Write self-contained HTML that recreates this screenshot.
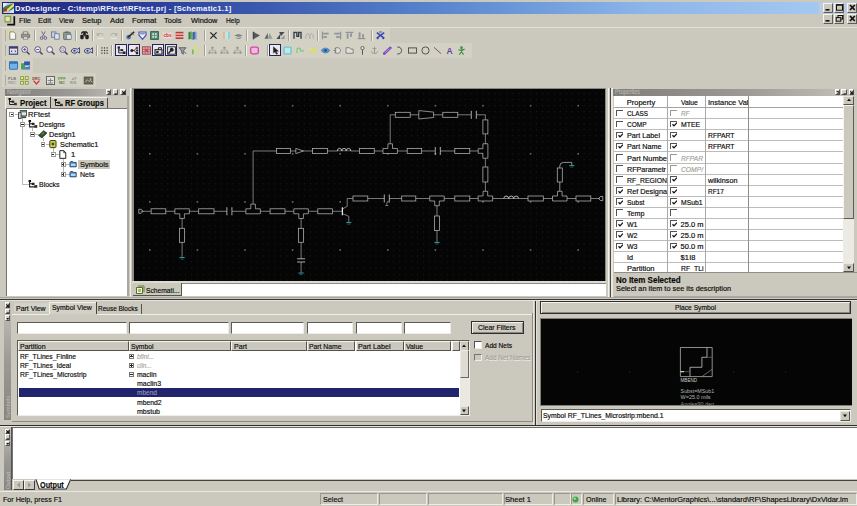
<!DOCTYPE html>
<html>
<head>
<meta charset="utf-8">
<title>DxDesigner</title>
<style>
html,body{margin:0;padding:0;}
body{width:857px;height:506px;overflow:hidden;background:#cbc9bd;font-family:"Liberation Sans",sans-serif;font-size:8px;color:#000;}
#app{position:relative;width:857px;height:506px;overflow:hidden;background:#cbc9bd;}
#app div,#app span,#app svg{position:absolute;box-sizing:border-box;white-space:nowrap;}
.t{line-height:10px;height:10px;font-size:8px;color:#0c0c0c;transform-origin:0 50%;-webkit-text-stroke:.18px currentColor;}
.b{font-weight:bold;}
.i{font-style:italic;}
.w{background:#fff;}
.k{background:#050505;}
.sunk{border:1px solid;border-color:#6f6c66 #f4f2ec #f4f2ec #6f6c66;}
.rais{border:1px solid;border-color:#f6f4ee #5f5c57 #5f5c57 #f6f4ee;}
.ptitle{background:linear-gradient(90deg,#7f7e7b 0%,#9c9a96 55%,#c6c3bb 100%);}
.hl{background:#f3f1ea;}
.dk{background:#6b6964;}
.vd{background:#3c3b38;}
.ic{transform:scale(.9);opacity:.92;}

</style>
</head>
<body>
<div id="app">
<div style="left:2px;top:2px;width:855px;height:11.6px;background:linear-gradient(90deg,#20267f 0%,#2a3f9c 18%,#5683cc 50%,#8cb5e9 75%,#a9ccf2 100%);"><span class="t b" style="left:13px;top:2.0px;font-size:7.7px;color:#f2f4fa;letter-spacing:0.24px;-webkit-text-stroke:0;">DxDesigner - C:\temp\RFtest\RFtest.prj - [Schematic1.1]</span></div>
<svg style="left:3px;top:3px" width="11" height="10" viewBox="0 0 11 10"><rect width="11" height="10" fill="#a8cce8"/><path d="M0 4L11 0V6L0 10z" fill="#4c7a4a"/><path d="M0 10 L11 0 L11 3 L3 10Z" fill="#e8e070"/><path d="M0 0h5L0 5z" fill="#e9ecef"/><path d="M6 10 L11 5 V10z" fill="#dfe6ea"/><circle cx="2.5" cy="7" r="1.6" fill="#b03030"/></svg>
<div style="left:819px;top:2px;width:38px;height:11.6px;background:#cfd0d0;opacity:.55"></div>
<div class="rais" style="left:822.5px;top:3px;width:10.5px;height:9.5px;background:#cbc9bd;"><svg style="left:-1px;top:-1px" width="11" height="10" viewBox="0 0 11 10"><rect x="2.5" y="6" width="4" height="1.6" fill="#111"/></svg></div>
<div class="rais" style="left:833.5px;top:3px;width:10.5px;height:9.5px;background:#cbc9bd;"><svg style="left:-1px;top:-1px" width="11" height="10" viewBox="0 0 11 10"><rect x="2.5" y="1.8" width="6" height="5.4" fill="none" stroke="#111" stroke-width="1"/><rect x="2" y="1.3" width="7" height="1.3" fill="#111"/></svg></div>
<div class="rais" style="left:846.5px;top:3px;width:10.5px;height:9.5px;background:#cbc9bd;"><svg style="left:-1px;top:-1px" width="11" height="10" viewBox="0 0 11 10"><path d="M3 2 L7.8 7 M7.8 2 L3 7" stroke="#111" stroke-width="1.7"/></svg></div>
<div class="rais" style="left:822.5px;top:14px;width:10.5px;height:9.5px;background:#cbc9bd;"><svg style="left:-1px;top:-1px" width="11" height="10" viewBox="0 0 11 10"><rect x="2.5" y="6" width="4" height="1.6" fill="#111"/></svg></div>
<div class="rais" style="left:833.5px;top:14px;width:10.5px;height:9.5px;background:#cbc9bd;"><svg style="left:-1px;top:-1px" width="11" height="10" viewBox="0 0 11 10"><rect x="4" y="1.5" width="4.6" height="3.6" fill="none" stroke="#111" stroke-width="1"/><rect x="2.2" y="3.6" width="4.6" height="3.6" fill="#cbc9bd" stroke="#111" stroke-width="1"/></svg></div>
<div class="rais" style="left:846.5px;top:14px;width:10.5px;height:9.5px;background:#cbc9bd;"><svg style="left:-1px;top:-1px" width="11" height="10" viewBox="0 0 11 10"><path d="M3 2 L7.8 7 M7.8 2 L3 7" stroke="#111" stroke-width="1.7"/></svg></div>
<svg style="left:3px;top:14px" width="13" height="12" viewBox="0 0 13 12"><rect x="1.4" y="1.7" width="6.9" height="6.8" fill="#8c9c58"/><rect x="2.6" y="2.9" width="4.2" height="4.2" fill="#dfe7a6"/><path d="M11.3 2.2V10.7H4.2" stroke="#0c0c0c" stroke-width="1.7" fill="none"/></svg>
<span class="t" style="left:19px;top:15.5px;transform:scaleX(0.931);">File</span>
<span class="t" style="left:38px;top:15.5px;transform:scaleX(0.942);">Edit</span>
<span class="t" style="left:59px;top:15.5px;transform:scaleX(0.843);">View</span>
<span class="t" style="left:82px;top:15.5px;transform:scaleX(0.933);">Setup</span>
<span class="t" style="left:110px;top:15.5px;transform:scaleX(0.962);">Add</span>
<span class="t" style="left:131.5px;top:15.5px;transform:scaleX(0.967);">Format</span>
<span class="t" style="left:164px;top:15.5px;transform:scaleX(0.936);">Tools</span>
<span class="t" style="left:190.5px;top:15.5px;transform:scaleX(0.931);">Window</span>
<span class="t" style="left:226px;top:15.5px;transform:scaleX(0.833);">Help</span>
<div style="left:0px;top:27px;width:857px;height:1px;background:#e3e1d8;"></div>
<div style="left:2px;top:28px;width:388px;height:15px;background:#d2d1c4;"></div>
<div style="left:2px;top:43px;width:470px;height:15px;background:#d2d1c4;"></div>
<div style="left:2px;top:58px;width:31px;height:15px;background:#d2d1c4;"></div>
<div style="left:2px;top:73px;width:94px;height:14px;background:#d2d1c4;"></div>
<div style="left:4.5px;top:30px;width:1px;height:11px;background:#f4f2ec;"></div>
<div style="left:5.4px;top:30px;width:0.8px;height:11px;background:#aeaba4;"></div>
<div style="left:4.5px;top:45px;width:1px;height:11px;background:#f4f2ec;"></div>
<div style="left:5.4px;top:45px;width:0.8px;height:11px;background:#aeaba4;"></div>
<div style="left:4.5px;top:60px;width:1px;height:11px;background:#f4f2ec;"></div>
<div style="left:5.4px;top:60px;width:0.8px;height:11px;background:#aeaba4;"></div>
<div style="left:4.5px;top:75px;width:1px;height:11px;background:#f4f2ec;"></div>
<div style="left:5.4px;top:75px;width:0.8px;height:11px;background:#aeaba4;"></div>
<svg class="ic" style="left:7.4px;top:29.5px" width="11" height="11" viewBox="0 0 11 11"><circle cx="3.5" cy="3" r="3" fill="#f1e870" opacity=".85"/><path d="M2.5 1.5h4.3l2.2 2.2v6H2.5z" fill="#fffef6" stroke="#6b6b62" stroke-width=".9"/></svg>
<svg class="ic" style="left:20.3px;top:29.5px" width="11" height="11" viewBox="0 0 11 11"><path d="M3 4V1.5h5V4" fill="#f4f4f0" stroke="#555" stroke-width=".8"/><rect x="1" y="4" width="9" height="4" rx="1" fill="#9a9892" stroke="#4a4a48" stroke-width=".8"/><rect x="3" y="7" width="5" height="2.5" fill="#e8e8e4" stroke="#555" stroke-width=".6"/></svg>
<div style="left:34.0px;top:29.5px;width:.9px;height:11px;background:#a3a199;"></div><div style="left:34.9px;top:29.5px;width:.8px;height:11px;background:#f1efe9;"></div>
<svg class="ic" style="left:37.5px;top:29.5px" width="11" height="11" viewBox="0 0 11 11"><path d="M3.5 1L7 7M7.5 1L4 7" stroke="#5a6a86" stroke-width="1.1" fill="none"/><circle cx="3.4" cy="8.4" r="1.5" fill="none" stroke="#6a4a9a" stroke-width="1"/><circle cx="7.6" cy="8.4" r="1.5" fill="none" stroke="#6a4a9a" stroke-width="1"/></svg>
<svg class="ic" style="left:49.5px;top:29.5px" width="11" height="11" viewBox="0 0 11 11"><rect x="1" y="1.5" width="5" height="6" fill="#c6cfdf" stroke="#5a6a90" stroke-width=".9"/><rect x="4.6" y="3.6" width="5" height="6" fill="#dfe5f0" stroke="#5a6a90" stroke-width=".9"/></svg>
<svg class="ic" style="left:62.0px;top:29.5px" width="11" height="11" viewBox="0 0 11 11"><rect x="1.2" y="2" width="7.6" height="8" rx=".8" fill="#8d9a8c" stroke="#4c5a50" stroke-width=".9"/><rect x="3.2" y="1" width="3.6" height="2" fill="#5a6660"/><rect x="4.6" y="4.6" width="5" height="5" fill="#e6eaf2" stroke="#5a6a90" stroke-width=".8"/></svg>
<div style="left:75.4px;top:29.5px;width:.9px;height:11px;background:#a3a199;"></div><div style="left:76.3px;top:29.5px;width:.8px;height:11px;background:#f1efe9;"></div>
<svg class="ic" style="left:78.5px;top:29.5px" width="11" height="11" viewBox="0 0 11 11"><path d="M2 3.2L3.6 1.4h1.2V5M9 3.2L7.4 1.4H6.2V5" stroke="#111" stroke-width="1.5" fill="none"/><rect x=".8" y="4.6" width="3.8" height="5" rx="1.2" fill="#111"/><rect x="6.4" y="4.6" width="3.8" height="5" rx="1.2" fill="#111"/><rect x="4.4" y="4" width="2.2" height="2.4" fill="#222"/></svg>
<div style="left:91.9px;top:29.5px;width:.9px;height:11px;background:#a3a199;"></div><div style="left:92.8px;top:29.5px;width:.8px;height:11px;background:#f1efe9;"></div>
<svg class="ic" style="left:94.5px;top:29.5px" width="11" height="11" viewBox="0 0 11 11"><path d="M2.4 4.6C4 2.6 7.4 2.6 8.8 5.4" stroke="#a3a19b" stroke-width="1" fill="none"/><path d="M1.4 2.4v3h3z" fill="#a3a19b"/><path d="M2 8.6h7.4" stroke="#f4f2ec" stroke-width=".9"/></svg>
<svg class="ic" style="left:107.5px;top:29.5px" width="11" height="11" viewBox="0 0 11 11"><path d="M8.6 4.6C7 2.6 3.6 2.6 2.2 5.4" stroke="#a3a19b" stroke-width="1" fill="none"/><path d="M9.6 2.4v3h-3z" fill="#a3a19b"/><path d="M2 8.6h7.4" stroke="#f4f2ec" stroke-width=".9"/></svg>
<div style="left:120.80000000000001px;top:29.5px;width:.9px;height:11px;background:#a3a199;"></div><div style="left:121.7px;top:29.5px;width:.8px;height:11px;background:#f1efe9;"></div>
<svg class="ic" style="left:125.1px;top:29.5px" width="11" height="11" viewBox="0 0 11 11"><circle cx="3.4" cy="7.4" r="2.6" fill="#4a78c8"/><path d="M2.6 7.6L9.6 1.4" stroke="#222" stroke-width="1.8"/><path d="M6.4 2.2l2.8 3" stroke="#555" stroke-width="1"/></svg>
<svg class="ic" style="left:136.8px;top:29.5px" width="11" height="11" viewBox="0 0 11 11"><path d="M1.6 1.6h7.8v3.6L5.5 9.8L1.6 5.2z" fill="#eef2fb" stroke="#3a4fb0" stroke-width="1.3"/><path d="M3 3.6h5" stroke="#3a4fb0" stroke-width="1"/></svg>
<svg class="ic" style="left:149.3px;top:29.5px" width="11" height="11" viewBox="0 0 11 11"><rect x="1.2" y="1.2" width="8.6" height="8.6" fill="#4f8a72" stroke="#1f4e3a" stroke-width="1"/><rect x="3" y="3" width="2" height="2" fill="#cfe6da"/><rect x="6" y="3" width="2" height="2" fill="#cfe6da"/><rect x="3" y="6" width="2" height="2" fill="#cfe6da"/><rect x="6" y="6" width="2" height="2" fill="#cfe6da"/></svg>
<svg class="ic" style="left:161.9px;top:29.5px" width="11" height="11" viewBox="0 0 11 11"><rect x="0" y="2.4" width="11" height="6.2" fill="#f6d8d8"/><text x="5.5" y="7.4" font-family="Liberation Sans,sans-serif" font-size="5.2" font-weight="bold" fill="#c0272d" text-anchor="middle">cbs</text></svg>
<svg class="ic" style="left:174.0px;top:29.5px" width="11" height="11" viewBox="0 0 11 11"><rect x="1.2" y="1.4" width="8.6" height="2" fill="#c22a2a"/><rect x="1.2" y="4.4" width="8.6" height="2" fill="#c22a2a"/><rect x="1.2" y="7.4" width="8.6" height="2" fill="#c22a2a"/><path d="M1.2 3.9h8.6M1.2 6.9h8.6" stroke="#f4dada" stroke-width=".8"/></svg>
<svg class="ic" style="left:186.9px;top:29.5px" width="11" height="11" viewBox="0 0 11 11"><path d="M1 2l2.6-1v8.4L1 10z" fill="#2f7a3a"/><path d="M3.6 1l2.4 1v8.4l-2.4-1z" fill="#5aa860"/><path d="M6 2l2.2-1v8.4L6 10.4z" fill="#3a56b8"/><path d="M8.2 1l1.8 1v8.4l-1.8-1z" fill="#7c92dc"/></svg>
<div style="left:203.9px;top:29.5px;width:.9px;height:11px;background:#a3a199;"></div><div style="left:204.8px;top:29.5px;width:.8px;height:11px;background:#f1efe9;"></div>
<svg class="ic" style="left:208.1px;top:29.5px" width="11" height="11" viewBox="0 0 11 11"><path d="M2 2l7 7M9 2l-7 7" stroke="#1a1a1a" stroke-width="1.4"/></svg>
<svg class="ic" style="left:221.0px;top:29.5px" width="11" height="11" viewBox="0 0 11 11"><rect x="1.6" y="1.6" width="2.2" height="7.8" fill="#e8b48a"/><rect x="3.8" y="1.6" width="3.4" height="7.8" fill="#bfe6e6"/><rect x="7.2" y="1.6" width="2.2" height="7.8" fill="#8fd0d4"/></svg>
<svg class="ic" style="left:233.2px;top:29.5px" width="11" height="11" viewBox="0 0 11 11"><text x="5.5" y="9" font-family="Liberation Sans,sans-serif" font-size="9" font-weight="bold" fill="#7d8a84" text-anchor="middle">S</text><path d="M1.4 5.6h8.2" stroke="#6a6a66" stroke-width=".9"/></svg>
<div style="left:246.20000000000002px;top:29.5px;width:.9px;height:11px;background:#a3a199;"></div><div style="left:247.10000000000002px;top:29.5px;width:.8px;height:11px;background:#f1efe9;"></div>
<svg class="ic" style="left:250.5px;top:29.5px" width="11" height="11" viewBox="0 0 11 11"><path d="M2 1.4L9.4 5.5L2 9.6z" fill="#4a5058"/><path d="M2 1.4v8.2" stroke="#2a2f36" stroke-width="1.2"/></svg>
<svg class="ic" style="left:262.5px;top:29.5px" width="11" height="11" viewBox="0 0 11 11"><path d="M1 9L4.6 2.6L5.4 9z" fill="#5a6068"/><path d="M10 9L6.4 2.6L5.6 9z" fill="#8e949c"/></svg>
<svg class="ic" style="left:275.0px;top:29.5px" width="11" height="11" viewBox="0 0 11 11"><path d="M1 9.4L5 4v5.4z" fill="#3a4048"/><path d="M4 1.6h6L6 6.4z" fill="#3a4048"/><path d="M5.6 9.4h4.4V5z" fill="#8e949c"/></svg>
<div style="left:288.0px;top:29.5px;width:.9px;height:11px;background:#a3a199;"></div><div style="left:288.90000000000003px;top:29.5px;width:.8px;height:11px;background:#f1efe9;"></div>
<svg class="ic" style="left:291.5px;top:29.5px" width="11" height="11" viewBox="0 0 11 11"><path d="M1.6 9V2h3.2v4.4h2V2h2.6v7" stroke="#24303c" stroke-width="1.5" fill="none"/></svg>
<svg class="ic" style="left:303.5px;top:29.5px" width="11" height="11" viewBox="0 0 11 11"><path d="M1.4 9V5.6L3.6 3l2 2.6V9M5.8 9V5.4L7.6 3l2 2.4V9" stroke="#a3a7aa" stroke-width="1" fill="none"/></svg>
<div style="left:316.79999999999995px;top:29.5px;width:.9px;height:11px;background:#a3a199;"></div><div style="left:317.7px;top:29.5px;width:.8px;height:11px;background:#f1efe9;"></div>
<svg class="ic" style="left:319.5px;top:29.5px" width="11" height="11" viewBox="0 0 11 11"><path d="M2 1.2v8.6" stroke="#7d838a" stroke-width="1.1"/><rect x="3" y="2.4" width="6" height="2" fill="#8a9098"/><rect x="3" y="6.2" width="4" height="2" fill="#8a9098"/></svg>
<svg class="ic" style="left:331.5px;top:29.5px" width="11" height="11" viewBox="0 0 11 11"><path d="M9 1.2v8.6" stroke="#7d838a" stroke-width="1.1"/><rect x="2" y="2.4" width="6" height="2" fill="#8a9098"/><rect x="4" y="6.2" width="4" height="2" fill="#8a9098"/></svg>
<svg class="ic" style="left:344.1px;top:29.5px" width="11" height="11" viewBox="0 0 11 11"><path d="M1.2 2h8.6" stroke="#7d838a" stroke-width="1.1"/><rect x="2.4" y="3" width="2" height="6" fill="#8a9098"/><rect x="6.2" y="3" width="2" height="4" fill="#8a9098"/></svg>
<svg class="ic" style="left:355.9px;top:29.5px" width="11" height="11" viewBox="0 0 11 11"><path d="M1.2 9h8.6" stroke="#7d838a" stroke-width="1.1"/><rect x="2.4" y="2" width="2" height="6" fill="#8a9098"/><rect x="6.2" y="4" width="2" height="4" fill="#8a9098"/></svg>
<div style="left:370.79999999999995px;top:29.5px;width:.9px;height:11px;background:#a3a199;"></div><div style="left:371.7px;top:29.5px;width:.8px;height:11px;background:#f1efe9;"></div>
<svg class="ic" style="left:374.7px;top:29.5px" width="11" height="11" viewBox="0 0 11 11"><path d="M1.4 2.4L9.6 8.4M9.6 2.4L1.4 8.4" stroke="#2a3cae" stroke-width="1.7"/><path d="M4 1.6l3 0" stroke="#2a3cae" stroke-width="1.2"/><circle cx="2.4" cy="8.6" r="1.2" fill="#2a3cae"/><circle cx="8.6" cy="8.6" r="1.2" fill="#2a3cae"/></svg>
<svg class="ic" style="left:7.9px;top:44.5px" width="11" height="11" viewBox="0 0 11 11"><rect x="0.8" y="1.4" width="9.4" height="8.2" fill="#e4e4f0" stroke="#2a2f6a" stroke-width="1.2"/><rect x="0.8" y="1.4" width="9.4" height="2" fill="#2a2f6a"/><path d="M2.4 6.4l1.6-1.4v2.8zM8.6 6.4L7 5v2.8z" fill="#2a2f6a"/></svg>
<svg class="ic" style="left:20.3px;top:44.5px" width="11" height="11" viewBox="0 0 11 11"><circle cx="4.6" cy="4.4" r="3.2" fill="#f2f0f6" stroke="#5a4a80" stroke-width="1.1"/><path d="M7 7l3 3" stroke="#3a3350" stroke-width="1.6"/><path d="M3 4.4h3.2M4.6 2.8V6" stroke="#5a3a90" stroke-width="1"/></svg>
<svg class="ic" style="left:32.5px;top:44.5px" width="11" height="11" viewBox="0 0 11 11"><circle cx="4.6" cy="4.4" r="3.2" fill="#f2f0f6" stroke="#5a4a80" stroke-width="1.1"/><path d="M7 7l3 3" stroke="#3a3350" stroke-width="1.6"/><path d="M3 4.4h3.2" stroke="#5a3a90" stroke-width="1"/></svg>
<svg class="ic" style="left:45.3px;top:44.5px" width="11" height="11" viewBox="0 0 11 11"><circle cx="4.6" cy="4.4" r="3.2" fill="#f2f0f6" stroke="#5a4a80" stroke-width="1.1"/><path d="M7 7l3 3" stroke="#3a3350" stroke-width="1.6"/></svg>
<svg class="ic" style="left:57.8px;top:44.5px" width="11" height="11" viewBox="0 0 11 11"><circle cx="4.6" cy="4.4" r="3.2" fill="#f2f0f6" stroke="#5a4a80" stroke-width="1.1"/><path d="M7 7l3 3" stroke="#3a3350" stroke-width="1.6"/><path d="M3.4 3.4h2.4v2H3.4z" fill="none" stroke="#8a7ab0" stroke-width=".7"/></svg>
<svg class="ic" style="left:69.9px;top:44.5px" width="11" height="11" viewBox="0 0 11 11"><path d="M1 5l2.2-1.6h3l1.2 1 2.6-2v6l-2.6-1.6-1.2 1.6h-3L1 7z" fill="#c9cce0" stroke="#2a2f6a" stroke-width="1"/><circle cx="4.4" cy="5.8" r="1.2" fill="#2a2f6a"/></svg>
<svg class="ic" style="left:82.5px;top:44.5px" width="11" height="11" viewBox="0 0 11 11"><path d="M1 5l2.2-1.6h3l1.2 1 2.6-2v6l-2.6-1.6-1.2 1.6h-3L1 7z" fill="#c9cce0" stroke="#2a2f6a" stroke-width="1"/><circle cx="4.4" cy="5.8" r="1.2" fill="#2a2f6a"/></svg>
<div style="left:95.80000000000001px;top:44.5px;width:.9px;height:11px;background:#a3a199;"></div><div style="left:96.7px;top:44.5px;width:.8px;height:11px;background:#f1efe9;"></div>
<svg class="ic" style="left:99.2px;top:44.5px" width="11" height="11" viewBox="0 0 11 11"><rect x="2" y="2" width="1.3" height="1.3" fill="#222"/><rect x="2" y="4.9" width="1.3" height="1.3" fill="#222"/><rect x="2" y="7.8" width="1.3" height="1.3" fill="#222"/><rect x="4.9" y="2" width="1.3" height="1.3" fill="#222"/><rect x="4.9" y="4.9" width="1.3" height="1.3" fill="#222"/><rect x="4.9" y="7.8" width="1.3" height="1.3" fill="#222"/><rect x="7.8" y="2" width="1.3" height="1.3" fill="#222"/><rect x="7.8" y="4.9" width="1.3" height="1.3" fill="#222"/><rect x="7.8" y="7.8" width="1.3" height="1.3" fill="#222"/></svg>
<div style="left:111.4px;top:44.5px;width:.9px;height:11px;background:#a3a199;"></div><div style="left:112.3px;top:44.5px;width:.8px;height:11px;background:#f1efe9;"></div>
<div style="left:115.4px;top:44px;width:12px;height:12px;background:#e9e8ee;border:1.1px solid #23235e;"></div>
<svg class="ic" style="left:115.9px;top:44.5px" width="11" height="11" viewBox="0 0 11 11"><path d="M2.4 1.6v6.6h6.6M2.4 5h3" stroke="#111" stroke-width="1.1" fill="none"/><rect x="1.2" y="1" width="2.6" height="2.4" fill="#111"/><rect x="4.6" y="4" width="2.8" height="2.2" fill="#111"/><rect x="7" y="6.6" width="3" height="2.8" fill="#111"/></svg>
<div style="left:128px;top:44px;width:12px;height:12px;background:#e9e8ee;border:1.1px solid #23235e;"></div>
<svg class="ic" style="left:128.5px;top:44.5px" width="11" height="11" viewBox="0 0 11 11"><path d="M2 5.5h3L8 2.6M5 5.5L8 8.4" stroke="#111" stroke-width="1" fill="none"/><circle cx="2.6" cy="5.5" r="1.7" fill="#111"/><rect x="7" y="1.4" width="2.6" height="2.4" fill="#a02020"/><rect x="7" y="7.2" width="2.6" height="2.4" fill="#111"/><rect x="7.4" y="4.4" width="2.2" height="2.2" fill="#111"/></svg>
<svg class="ic" style="left:140.5px;top:44.5px" width="11" height="11" viewBox="0 0 11 11"><rect x="1" y="1.4" width="9" height="8.2" fill="#e9a8b0" stroke="#8a3040" stroke-width=".9"/><path d="M1 4.2h9M1 6.8h9M4 1.4v8.2M7 1.4v8.2" stroke="#a84858" stroke-width=".8"/><rect x="4" y="4.2" width="3" height="2.6" fill="#c23a4a"/></svg>
<div style="left:152px;top:44px;width:12px;height:12px;background:#e9e8ee;border:1.1px solid #23235e;"></div>
<svg class="ic" style="left:152.5px;top:44.5px" width="11" height="11" viewBox="0 0 11 11"><rect x="1.6" y="4.6" width="7.8" height="5" fill="none" stroke="#111" stroke-width="1.2"/><path d="M5.4 4.4V2.4h3.4v2" stroke="#111" stroke-width="1.1" fill="none"/><rect x="3" y="6" width="2.6" height="2.4" fill="#111"/></svg>
<div style="left:165px;top:44px;width:12px;height:12px;background:#e9e8ee;border:1.1px solid #23235e;"></div>
<svg class="ic" style="left:165.5px;top:44.5px" width="11" height="11" viewBox="0 0 11 11"><rect x="1.2" y="1.4" width="8.6" height="8.2" fill="none" stroke="#111" stroke-width="1"/><circle cx="5.8" cy="4.6" r="2.2" fill="#111"/><path d="M4.4 6L2 9" stroke="#111" stroke-width="1.6"/><path d="M7 3l2 0" stroke="#fff" stroke-width=".7"/></svg>
<svg class="ic" style="left:177.0px;top:44.5px" width="11" height="11" viewBox="0 0 11 11"><path d="M1.6 2.4h7.8L6.4 6v3.6L4.6 8.4V6z" fill="#9a9ca0" stroke="#4a4c52" stroke-width=".9"/><path d="M7.4 6.6l2 2.4" stroke="#3a3c42" stroke-width="1"/></svg>
<svg class="ic" style="left:189.5px;top:44.5px" width="11" height="11" viewBox="0 0 11 11"><path d="M2.6 9.6V4.2c0-3 5.8-3 5.8 0v5.4" stroke="#d8e060" stroke-width="1.4" fill="none"/><path d="M2.6 9.6V4.4" stroke="#58a858" stroke-width="1.4"/></svg>
<div style="left:203.9px;top:44.5px;width:.9px;height:11px;background:#a3a199;"></div><div style="left:204.8px;top:44.5px;width:.8px;height:11px;background:#f1efe9;"></div>
<svg class="ic" style="left:206.5px;top:44.5px" width="11" height="11" viewBox="0 0 11 11"><rect x="4.2" y="1.4" width="2.4" height="2.2" fill="#8a8c88"/><rect x="1" y="6.8" width="2.4" height="2.2" fill="#8a8c88"/><rect x="4.2" y="6.8" width="2.4" height="2.2" fill="#a6a8a4"/><rect x="7.6" y="6.8" width="2.4" height="2.2" fill="#8a8c88"/><path d="M5.4 3.6v1.6M2.2 6.8V5.2h6.6v1.6" stroke="#9a9c98" stroke-width=".7" fill="none"/></svg>
<svg class="ic" style="left:219.0px;top:44.5px" width="11" height="11" viewBox="0 0 11 11"><rect x="4.2" y="1.4" width="2.4" height="2.2" fill="#8a8c88"/><rect x="1" y="6.8" width="2.4" height="2.2" fill="#8a8c88"/><rect x="4.2" y="6.8" width="2.4" height="2.2" fill="#a6a8a4"/><rect x="7.6" y="6.8" width="2.4" height="2.2" fill="#8a8c88"/><path d="M5.4 3.6v1.6M2.2 6.8V5.2h6.6v1.6" stroke="#9a9c98" stroke-width=".7" fill="none"/></svg>
<svg class="ic" style="left:231.5px;top:44.5px" width="11" height="11" viewBox="0 0 11 11"><rect x="4.2" y="1.4" width="2.4" height="2.2" fill="#8a8c88"/><rect x="1" y="6.8" width="2.4" height="2.2" fill="#8a8c88"/><rect x="4.2" y="6.8" width="2.4" height="2.2" fill="#a6a8a4"/><rect x="7.6" y="6.8" width="2.4" height="2.2" fill="#8a8c88"/><path d="M5.4 3.6v1.6M2.2 6.8V5.2h6.6v1.6" stroke="#9a9c98" stroke-width=".7" fill="none"/></svg>
<div style="left:245.4px;top:44.5px;width:.9px;height:11px;background:#a3a199;"></div><div style="left:246.3px;top:44.5px;width:.8px;height:11px;background:#f1efe9;"></div>
<svg class="ic" style="left:248.9px;top:44.5px" width="11" height="11" viewBox="0 0 11 11"><rect x="1.2" y="1.8" width="8.6" height="7.4" rx="2" fill="#f4b8e0" stroke="#d63aa8" stroke-width="1.5"/></svg>
<div style="left:266.7px;top:44.5px;width:.9px;height:11px;background:#a3a199;"></div><div style="left:267.6px;top:44.5px;width:.8px;height:11px;background:#f1efe9;"></div>
<div style="left:269.2px;top:44px;width:12px;height:12px;background:#e9e8ee;border:1.1px solid #23235e;"></div>
<svg class="ic" style="left:269.7px;top:44.5px" width="11" height="11" viewBox="0 0 11 11"><path d="M3.2 1.4v7l1.8-1.6 1.4 3 1.4-.6-1.4-3h2.4z" fill="#111" stroke="#111" stroke-width=".5"/><path d="M6.4 7.4l1.6 2.2" stroke="#b03030" stroke-width="1"/></svg>
<svg class="ic" style="left:282.3px;top:44.5px" width="11" height="11" viewBox="0 0 11 11"><rect x="1.6" y="1.8" width="7.8" height="7.4" rx="1" fill="#bfeaf0" stroke="#5fc8d8" stroke-width="1.5"/></svg>
<svg class="ic" style="left:294.5px;top:44.5px" width="11" height="11" viewBox="0 0 11 11"><path d="M1.6 8.4V4.6c0-2.4 4-2.4 4 0v1.4h3.8" stroke="#7cc87c" stroke-width="1.4" fill="none"/></svg>
<svg class="ic" style="left:307.5px;top:44.5px" width="11" height="11" viewBox="0 0 11 11"><path d="M1.2 5.5h8.6M5.5 2.4v6.2" stroke="#e2e04a" stroke-width="1.6"/><rect x="1.2" y="3.2" width="2" height="1.6" fill="#e8e680"/></svg>
<svg class="ic" style="left:320.2px;top:44.5px" width="11" height="11" viewBox="0 0 11 11"><path d="M.8 5.5C3 2 8 2 10.2 5.5C8 9 3 9 .8 5.5z" fill="#4a90d0" stroke="#2a6ab0" stroke-width=".8"/><circle cx="5.5" cy="5.5" r="1.6" fill="#1a4a8a"/></svg>
<svg class="ic" style="left:331.5px;top:44.5px" width="11" height="11" viewBox="0 0 11 11"><path d="M1 5.5h2.4M3.4 2.4h2.4c4 0 4 6.2 0 6.2H3.4z" fill="#e2e0da" stroke="#6a6c70" stroke-width=".9"/><path d="M2 3.6h1.4M2 7.4h1.4" stroke="#6a6c70" stroke-width=".8"/></svg>
<svg class="ic" style="left:344.1px;top:44.5px" width="11" height="11" viewBox="0 0 11 11"><path d="M1.6 2.4h4l1.4 1.6h2.6v4.6h-8z" fill="#e2e0da" stroke="#6a6c70" stroke-width=".9"/></svg>
<svg class="ic" style="left:356.5px;top:44.5px" width="11" height="11" viewBox="0 0 11 11"><circle cx="5.5" cy="2.8" r="1.8" fill="#f0eee8" stroke="#4a4c52" stroke-width="1"/><path d="M5.5 4.6v5.6" stroke="#4a4c52" stroke-width="1.1"/></svg>
<svg class="ic" style="left:368.9px;top:44.5px" width="11" height="11" viewBox="0 0 11 11"><path d="M5.5 1.4v7.4M3.4 3.4h4.2M2 6.4c.4 3.2 6.6 3.2 7 0" stroke="#8a8c90" stroke-width="1" fill="none"/></svg>
<svg class="ic" style="left:381.8px;top:44.5px" width="11" height="11" viewBox="0 0 11 11"><path d="M2 8.8L8.6 2.6" stroke="#7a3ac0" stroke-width="3" stroke-linecap="round"/><path d="M2.6 8.2L8 3.2" stroke="#c8a0f0" stroke-width=".9"/></svg>
<svg class="ic" style="left:394.3px;top:44.5px" width="11" height="11" viewBox="0 0 11 11"><path d="M3 1.6c6.4-.6 6.4 8.4 0 7.8" stroke="#3a3c44" stroke-width="1" fill="none"/></svg>
<svg class="ic" style="left:406.9px;top:44.5px" width="11" height="11" viewBox="0 0 11 11"><rect x="1" y="2.6" width="9" height="5.8" fill="none" stroke="#3a3c44" stroke-width="1"/></svg>
<svg class="ic" style="left:419.5px;top:44.5px" width="11" height="11" viewBox="0 0 11 11"><circle cx="5.5" cy="5.5" r="4" fill="none" stroke="#3a3c44" stroke-width="1"/></svg>
<svg class="ic" style="left:431.9px;top:44.5px" width="11" height="11" viewBox="0 0 11 11"><path d="M1.6 2L9.4 9" stroke="#4a4c54" stroke-width="1"/></svg>
<svg class="ic" style="left:444.3px;top:44.5px" width="11" height="11" viewBox="0 0 11 11"><text x="5.5" y="9.4" font-family="Liberation Sans,sans-serif" font-size="9.5" font-weight="bold" fill="#5a3aa0" text-anchor="middle">A</text></svg>
<svg class="ic" style="left:456.2px;top:44.5px" width="11" height="11" viewBox="0 0 11 11"><circle cx="5.5" cy="2.4" r="1.5" fill="#3a8a3a"/><path d="M5.5 3.6v3.4M2 4.6l3.5 1 3.5-1.6M5.5 7l-2.6 3M5.5 7l2.4 3" stroke="#3a8a3a" stroke-width="1.3" fill="none"/></svg>
<svg class="ic" style="left:7.5px;top:59.5px" width="11" height="11" viewBox="0 0 11 11"><rect x="1" y="1.4" width="9" height="8.2" rx="1" fill="#6ab0e8" stroke="#2a6ab8" stroke-width="1.2"/><rect x="1" y="1.4" width="9" height="2.2" fill="#2a6ab8"/></svg>
<svg class="ic" style="left:20.3px;top:59.5px" width="11" height="11" viewBox="0 0 11 11"><rect x="0.6" y="3" width="4.4" height="7" fill="#3a9a5a"/><rect x="4" y="1" width="6.4" height="4" fill="#2a4aa8"/><rect x="5" y="5.6" width="5.4" height="4.4" fill="#4a70c8"/><path d="M2 2.4l2-1.6M5 6.6h4" stroke="#e8f0e8" stroke-width=".9"/></svg>
<svg class="ic" style="left:7.1px;top:75.3px" width="11" height="11" viewBox="0 0 11 11"><text x="0.6" y="4.6" font-family="Liberation Sans,sans-serif" font-size="4.4" font-weight="bold" fill="#6a6c70">PLB</text><text x="0.6" y="9.4" font-family="Liberation Sans,sans-serif" font-size="4.4" font-weight="bold" fill="#9a9c9e">REC</text></svg>
<svg class="ic" style="left:19.2px;top:75.3px" width="11" height="11" viewBox="0 0 11 11"><rect x="1.2" y="1.2" width="3.2" height="3.2" fill="#eef0c0" stroke="#7a9a20" stroke-width="1"/><rect x="1.2" y="6.4" width="3.2" height="3.2" fill="#eef0c0" stroke="#7a9a20" stroke-width="1"/><rect x="6.4" y="1.2" width="3.2" height="3.2" fill="#eef0c0" stroke="#7a9a20" stroke-width="1"/><rect x="6.4" y="6.4" width="3.2" height="3.2" fill="#eef0c0" stroke="#7a9a20" stroke-width="1"/></svg>
<svg class="ic" style="left:30.9px;top:75.3px" width="11" height="11" viewBox="0 0 11 11"><text x="0.8" y="4.4" font-family="Liberation Sans,sans-serif" font-size="4.2" font-weight="bold" fill="#8a2a2a">DRC</text><path d="M2.2 5.6L5.5 9.4L8.8 5.6" stroke="#d02a2a" stroke-width="1.5" fill="none"/></svg>
<svg class="ic" style="left:45.0px;top:75.3px" width="11" height="11" viewBox="0 0 11 11"><rect x="1" y="1" width="9" height="9" fill="#e6e4de" stroke="#5a5c60" stroke-width="1.1"/><path d="M2.4 5.5h6.2M5.5 3v5" stroke="#6a6c70" stroke-width=".9"/><path d="M2.6 8.4h5.8" stroke="#5a5c60" stroke-width=".8"/></svg>
<svg class="ic" style="left:56.5px;top:75.3px" width="11" height="11" viewBox="0 0 11 11"><text x="0.6" y="4.6" font-family="Liberation Sans,sans-serif" font-size="4.4" font-weight="bold" fill="#4a8a3a">FPF</text><text x="1.6" y="9.6" font-family="Liberation Sans,sans-serif" font-size="4.6" font-weight="bold" fill="#3a7a2a">NC</text></svg>
<svg class="ic" style="left:68.5px;top:75.3px" width="11" height="11" viewBox="0 0 11 11"><text x="2.4" y="4.8" font-family="Liberation Sans,sans-serif" font-size="4.6" font-weight="bold" fill="#7a7c80">x?</text><text x="0.6" y="9.6" font-family="Liberation Sans,sans-serif" font-size="4.2" font-weight="bold" fill="#8a8c90">R/S</text></svg>
<svg class="ic" style="left:83.0px;top:75.3px" width="11" height="11" viewBox="0 0 11 11"><rect x="0.4" y="1.6" width="10.2" height="7.8" fill="#5a6048" stroke="#3a3e30" stroke-width=".8"/><path d="M1.6 7.6l2.6-3 2 2 1.6-1.4 2 2.4" stroke="#c8ccb0" stroke-width=".9" fill="none"/><circle cx="7.8" cy="3.8" r=".9" fill="#d8dcc0"/></svg>
<div class="ptitle" style="left:5px;top:88.7px;width:122px;height:7px;"><span class="t" style="left:2px;top:-0.8px;font-size:6.3px;color:#b4b2ac;transform:scaleX(0.890);top:-1.5px;">Navigator</span></div>
<div style="left:105.5px;top:89.3px;width:5.6px;height:5.6px;background:#d2d1c4;border:.5px solid;border-color:#fff #555 #555 #fff;"><svg style="left:-.5px;top:-.5px" width="5.6" height="5.6" viewBox="0 0 5.6 5.6"><path d="M1.6 1.6h2.2v1.6H2.8v1.2" stroke="#222" stroke-width=".9" fill="none"/></svg></div>
<div style="left:112.7px;top:89.3px;width:5.6px;height:5.6px;background:#d2d1c4;border:.5px solid;border-color:#fff #555 #555 #fff;"><svg style="left:-.5px;top:-.5px" width="5.6" height="5.6" viewBox="0 0 5.6 5.6"><rect x="1.6" y="3.4" width="2.4" height="1" fill="#222"/></svg></div>
<div style="left:120px;top:89.3px;width:5.6px;height:5.6px;background:#d2d1c4;border:.5px solid;border-color:#fff #555 #555 #fff;"><svg style="left:-.5px;top:-.5px" width="5.6" height="5.6" viewBox="0 0 5.6 5.6"><path d="M1.3 1.3L4.3 4.3M4.3 1.3L1.3 4.3" stroke="#111" stroke-width="1.1"/></svg></div>
<div style="left:5px;top:96px;width:45px;height:12.5px;background:#d2d0c4;border-top:1px solid #f2f0ea;border-left:1px solid #f2f0ea;"></div>
<div style="left:50px;top:96.5px;width:1.4px;height:11.5px;background:#3f3e3b;"></div>
<div style="left:106.6px;top:97.5px;width:1.2px;height:10.5px;background:#4a4946;"></div>
<div style="left:51.5px;top:97px;width:55px;height:1px;background:#efede7;"></div>
<svg style="left:8px;top:98px" width="9" height="8" viewBox="0 0 9 8"><path d="M1.5 0.5v6h7M1.5 3.5h3" stroke="#222" stroke-width="1" fill="none"/><rect x="0.5" y="0" width="2.4" height="2" fill="#111"/><rect x="3.6" y="2.6" width="2.6" height="2.2" fill="#222"/><rect x="6" y="4.8" width="2.8" height="2.4" fill="#333"/></svg>
<svg style="left:54px;top:98.5px" width="9" height="8" viewBox="0 0 9 8"><path d="M1.5 0.5v6h7M1.5 3.5h3" stroke="#222" stroke-width="1" fill="none"/><rect x="0.5" y="0" width="2.4" height="2" fill="#111"/><rect x="3.6" y="2.6" width="2.6" height="2.2" fill="#222"/><rect x="6" y="4.8" width="2.8" height="2.4" fill="#333"/></svg>
<span class="t b" style="left:19.6px;top:98.1px;font-size:8.6px;transform:scaleX(0.913);">Project</span>
<span class="t b" style="left:65px;top:98.4px;font-size:8.6px;transform:scaleX(0.874);">RF Groups</span>
<div style="left:5.5px;top:108px;width:121.5px;height:188px;background:#fff;border-top:1px solid #77746e;border-left:1px solid #77746e;"></div>
<div style="left:127px;top:96px;width:2px;height:200px;background:#a9a7a0;"></div>
<div style="left:130px;top:88px;width:1.2px;height:209px;background:#f2f0ea;"></div>
<div style="left:22.200000000000003px;top:117.4px;width:.8px;height:67.21000000000001px;background:#bab8b4;"></div>
<div style="left:22.6px;top:184.21px;width:7.399999999999999px;height:.8px;background:#bab8b4;"></div>
<div style="left:14.6px;top:114.0px;width:4.4px;height:.8px;background:#bab8b4;"></div>
<div style="left:25.4px;top:124.03px;width:3.6000000000000014px;height:.8px;background:#bab8b4;"></div>
<div style="left:32.2px;top:128.43px;width:.8px;height:3.030000000000001px;background:#bab8b4;"></div>
<div style="left:35.4px;top:134.06px;width:3.6000000000000014px;height:.8px;background:#bab8b4;"></div>
<div style="left:42.6px;top:138.46px;width:.8px;height:3.030000000000001px;background:#bab8b4;"></div>
<div style="left:45.8px;top:144.09px;width:4.200000000000003px;height:.8px;background:#bab8b4;"></div>
<div style="left:52.800000000000004px;top:148.49px;width:.8px;height:3.030000000000001px;background:#bab8b4;"></div>
<div style="left:56px;top:154.12px;width:4px;height:.8px;background:#bab8b4;"></div>
<div style="left:62.800000000000004px;top:158.52px;width:.8px;height:13.059999999999974px;background:#bab8b4;"></div>
<div style="left:66px;top:164.15px;width:4px;height:.8px;background:#bab8b4;"></div>
<div style="left:66px;top:174.17999999999998px;width:4px;height:.8px;background:#bab8b4;"></div>
<div style="left:9.4px;top:112.0px;width:4.8px;height:4.8px;background:#fff;border:.7px solid #9c9a96;"></div><div style="left:10.600000000000001px;top:113.9px;width:2.4px;height:1px;background:#222;"></div>
<div style="left:20.200000000000003px;top:122.03px;width:4.8px;height:4.8px;background:#fff;border:.7px solid #9c9a96;"></div><div style="left:21.400000000000002px;top:123.93px;width:2.4px;height:1px;background:#222;"></div>
<div style="left:30.200000000000003px;top:132.06px;width:4.8px;height:4.8px;background:#fff;border:.7px solid #9c9a96;"></div><div style="left:31.400000000000002px;top:133.96px;width:2.4px;height:1px;background:#222;"></div>
<div style="left:40.6px;top:142.09px;width:4.8px;height:4.8px;background:#fff;border:.7px solid #9c9a96;"></div><div style="left:41.8px;top:143.99px;width:2.4px;height:1px;background:#222;"></div>
<div style="left:50.800000000000004px;top:152.12px;width:4.8px;height:4.8px;background:#fff;border:.7px solid #9c9a96;"></div><div style="left:52.0px;top:154.02px;width:2.4px;height:1px;background:#222;"></div>
<div style="left:60.800000000000004px;top:162.15px;width:4.8px;height:4.8px;background:#fff;border:.7px solid #9c9a96;"></div><div style="left:62.0px;top:164.05px;width:2.4px;height:1px;background:#222;"></div><div style="left:62.800000000000004px;top:163.35000000000002px;width:.8px;height:2.4px;background:#333;"></div>
<div style="left:60.800000000000004px;top:172.17999999999998px;width:4.8px;height:4.8px;background:#fff;border:.7px solid #9c9a96;"></div><div style="left:62.0px;top:174.07999999999998px;width:2.4px;height:1px;background:#222;"></div><div style="left:62.800000000000004px;top:173.38px;width:.8px;height:2.4px;background:#333;"></div>
<svg style="left:17.8px;top:110.0px" width="9" height="9" viewBox="0 0 10 10"><rect x="2.5" y="0.5" width="7" height="6" fill="#dfe8e4" stroke="#3c4a44" stroke-width="1"/><rect x="3" y="1" width="6" height="1.6" fill="#5a8a78"/><rect x="0.5" y="3" width="3" height="6.5" fill="#c9d4cf" stroke="#2b2b2b" stroke-width=".9"/><rect x="4" y="7" width="5" height="2" fill="#444"/></svg>
<svg style="left:28px;top:119.93px" width="9.5" height="8.5" viewBox="0 0 9 8"><path d="M1.5 0.5v6h7M1.5 3.5h3" stroke="#222" stroke-width="1" fill="none"/><rect x="0.5" y="0" width="2.4" height="2" fill="#111"/><rect x="3.6" y="2.6" width="2.6" height="2.2" fill="#222"/><rect x="6" y="4.8" width="2.8" height="2.4" fill="#333"/></svg>
<svg style="left:38px;top:130.46px" width="9.5" height="8.4" viewBox="0 0 11 10"><path d="M0.5 6.5 L6.5 0.8 L10.5 3.6 L4.4 9.4Z" fill="#2f5228" stroke="#16240f" stroke-width=".8"/><path d="M4 5.5l3-2.6" stroke="#a9c88f" stroke-width=".8"/></svg>
<svg style="left:49px;top:140.49px" width="7.8" height="8.2" viewBox="0 0 9 10"><rect x="0.7" y="0.7" width="7.6" height="8.6" rx="1" fill="#d2d048" stroke="#3a3a1c" stroke-width="1.2"/><rect x="3" y="3.4" width="3" height="3" fill="#444"/></svg>
<svg style="left:59.2px;top:150.12px" width="7.6" height="9" viewBox="0 0 8 10"><path d="M0.7 0.7h4.3l2.3 2.3v6.3H0.7z" fill="#fff" stroke="#222" stroke-width="1.1"/><path d="M5 0.7v2.3h2.3" fill="none" stroke="#222" stroke-width=".8"/></svg>
<svg style="left:69.3px;top:161.35000000000002px" width="8.2" height="6.4" viewBox="0 0 9 8"><path d="M0.6 7.3V1.8l1-1.1h2.4l.9 1.1h3.5v5.5z" fill="#3e7fc4" stroke="#16365e" stroke-width="1"/><path d="M1.6 3.2h6v3H1.6z" fill="#b4d8f4"/></svg>
<svg style="left:69.3px;top:171.38px" width="8.2" height="6.4" viewBox="0 0 9 8"><path d="M0.6 7.3V1.8l1-1.1h2.4l.9 1.1h3.5v5.5z" fill="#3e7fc4" stroke="#16365e" stroke-width="1"/><path d="M1.6 3.2h6v3H1.6z" fill="#b4d8f4"/></svg>
<svg style="left:28px;top:180.11px" width="9.5" height="8.5" viewBox="0 0 9 8"><path d="M1.5 0.5v6h7M1.5 3.5h3" stroke="#222" stroke-width="1" fill="none"/><rect x="0.5" y="0" width="2.4" height="2" fill="#111"/><rect x="3.6" y="2.6" width="2.6" height="2.2" fill="#222"/><rect x="6" y="4.8" width="2.8" height="2.4" fill="#333"/></svg>
<div style="left:78.4px;top:159.75px;width:31.6px;height:9.6px;background:#cbc9bd;"></div>
<span class="t" style="left:28.3px;top:109.9px;font-size:7.7px;transform:scaleX(0.972);">RFtest</span>
<span class="t" style="left:38.9px;top:119.9px;font-size:7.7px;transform:scaleX(0.929);">Designs</span>
<span class="t" style="left:49.2px;top:130.0px;font-size:7.7px;transform:scaleX(0.943);">Design1</span>
<span class="t" style="left:59.5px;top:140.0px;font-size:7.7px;transform:scaleX(0.953);">Schematic1</span>
<span class="t" style="left:71px;top:150.0px;font-size:7.7px;">1</span>
<span class="t" style="left:79.8px;top:160.1px;font-size:7.7px;transform:scaleX(0.970);">Symbols</span>
<span class="t" style="left:79.8px;top:170.1px;font-size:7.7px;transform:scaleX(0.917);">Nets</span>
<span class="t" style="left:38.9px;top:180.1px;font-size:7.7px;transform:scaleX(0.909);">Blocks</span>
<div style="left:131.6px;top:88px;width:474.6px;height:194.5px;background:#8a8883;"></div>
<div class="k" style="left:133.2px;top:89px;width:472.2px;height:192.2px;"></div>
<div style="left:131.6px;top:88px;width:2.4px;height:194.5px;background:#8f8d88;"></div>
<svg style="left:133.2px;top:89px" width="472.2" height="192.4" viewBox="0 0 472.2 192.4"><defs><pattern id="mg" x="16.30" y="16.20" width="5.950" height="6.013" patternUnits="userSpaceOnUse"><rect x="0" y="0" width="1" height="1" fill="#1e1e1e"/></pattern></defs><rect x="0" y="0" width="472.2" height="192.4" fill="url(#mg)"/><rect x="16.0" y="15.9" width="1.6" height="1.6" fill="#6a6a6a"/><rect x="16.0" y="64.0" width="1.6" height="1.6" fill="#6a6a6a"/><rect x="16.0" y="112.1" width="1.6" height="1.6" fill="#6a6a6a"/><rect x="16.0" y="160.2" width="1.6" height="1.6" fill="#6a6a6a"/><rect x="63.6" y="15.9" width="1.6" height="1.6" fill="#6a6a6a"/><rect x="63.6" y="64.0" width="1.6" height="1.6" fill="#6a6a6a"/><rect x="63.6" y="112.1" width="1.6" height="1.6" fill="#6a6a6a"/><rect x="63.6" y="160.2" width="1.6" height="1.6" fill="#6a6a6a"/><rect x="111.2" y="15.9" width="1.6" height="1.6" fill="#6a6a6a"/><rect x="111.2" y="64.0" width="1.6" height="1.6" fill="#6a6a6a"/><rect x="111.2" y="112.1" width="1.6" height="1.6" fill="#6a6a6a"/><rect x="111.2" y="160.2" width="1.6" height="1.6" fill="#6a6a6a"/><rect x="158.8" y="15.9" width="1.6" height="1.6" fill="#6a6a6a"/><rect x="158.8" y="64.0" width="1.6" height="1.6" fill="#6a6a6a"/><rect x="158.8" y="112.1" width="1.6" height="1.6" fill="#6a6a6a"/><rect x="158.8" y="160.2" width="1.6" height="1.6" fill="#6a6a6a"/><rect x="206.4" y="15.9" width="1.6" height="1.6" fill="#6a6a6a"/><rect x="206.4" y="64.0" width="1.6" height="1.6" fill="#6a6a6a"/><rect x="206.4" y="112.1" width="1.6" height="1.6" fill="#6a6a6a"/><rect x="206.4" y="160.2" width="1.6" height="1.6" fill="#6a6a6a"/><rect x="254.0" y="15.9" width="1.6" height="1.6" fill="#6a6a6a"/><rect x="254.0" y="64.0" width="1.6" height="1.6" fill="#6a6a6a"/><rect x="254.0" y="112.1" width="1.6" height="1.6" fill="#6a6a6a"/><rect x="254.0" y="160.2" width="1.6" height="1.6" fill="#6a6a6a"/><rect x="301.6" y="15.9" width="1.6" height="1.6" fill="#6a6a6a"/><rect x="301.6" y="64.0" width="1.6" height="1.6" fill="#6a6a6a"/><rect x="301.6" y="112.1" width="1.6" height="1.6" fill="#6a6a6a"/><rect x="301.6" y="160.2" width="1.6" height="1.6" fill="#6a6a6a"/><rect x="349.2" y="15.9" width="1.6" height="1.6" fill="#6a6a6a"/><rect x="349.2" y="64.0" width="1.6" height="1.6" fill="#6a6a6a"/><rect x="349.2" y="112.1" width="1.6" height="1.6" fill="#6a6a6a"/><rect x="349.2" y="160.2" width="1.6" height="1.6" fill="#6a6a6a"/><rect x="396.8" y="15.9" width="1.6" height="1.6" fill="#6a6a6a"/><rect x="396.8" y="64.0" width="1.6" height="1.6" fill="#6a6a6a"/><rect x="396.8" y="112.1" width="1.6" height="1.6" fill="#6a6a6a"/><rect x="396.8" y="160.2" width="1.6" height="1.6" fill="#6a6a6a"/><rect x="444.4" y="15.9" width="1.6" height="1.6" fill="#6a6a6a"/><rect x="444.4" y="64.0" width="1.6" height="1.6" fill="#6a6a6a"/><rect x="444.4" y="112.1" width="1.6" height="1.6" fill="#6a6a6a"/><rect x="444.4" y="160.2" width="1.6" height="1.6" fill="#6a6a6a"/><path d="M7.8 122.3 L209.4 122.3" stroke="#a2a2a2" stroke-width="0.75" fill="none"/><path d="M120.1 116.3 L120.1 62.0 L241.3 62.0" stroke="#a2a2a2" stroke-width="0.75" fill="none"/><path d="M241.3 62.0 L352.4 62.0" stroke="#a2a2a2" stroke-width="0.75" fill="none"/><path d="M257.2 56.0 L257.2 25.8 L352.4 25.8 L352.4 109.5" stroke="#a2a2a2" stroke-width="0.75" fill="none"/><path d="M209.4 118.3 L209.4 126.3" stroke="#e0e0e0" stroke-width="1.3" fill="none"/><path d="M210.0 119.7 L214.2 117.3 L214.2 109.5 L466.8 109.5" stroke="#a2a2a2" stroke-width="0.75" fill="none"/><path d="M210.0 124.9 L215.8 127.3 L215.8 133.0" stroke="#a2a2a2" stroke-width="0.75" fill="none"/><path d="M49.1 128.3 L49.1 168.0" stroke="#a2a2a2" stroke-width="0.75" fill="none"/><path d="M168.1 128.3 L168.1 183.6" stroke="#a2a2a2" stroke-width="0.75" fill="none"/><path d="M304.0 115.5 L304.0 153.0" stroke="#a2a2a2" stroke-width="0.75" fill="none"/><path d="M426.8 103.5 V77.0 Q426.8 73.4 430.8 73.4 H438.8 V76.0" stroke="#b4b4b4" stroke-width=".8" fill="none"/><path d="M5.8 120.3 h2.4 l1.8 2 l-1.8 2 h-2.4z" fill="none" stroke="#c8c8c8" stroke-width=".7"/><path d="M469.8 107.5 h-2.4 l-1.8 2 l1.8 2 h2.4z" fill="none" stroke="#c8c8c8" stroke-width=".7"/><rect x="18.1" y="119.8" width="14.7" height="5" fill="#050505" stroke="#b6b6b6" stroke-width=".75"/><path d="M41.85000000000002 119.80000000000001 H56.35000000000002 V124.80000000000001 H51.40000000000002 V129.5 H46.800000000000026 V124.80000000000001 H41.85000000000002 Z" fill="#050505" stroke="#b8b8b8" stroke-width=".75"/><rect x="65.7" y="119.8" width="15.3" height="5" fill="#050505" stroke="#b6b6b6" stroke-width=".75"/><path d="M93.9 118.3 L93.9 126.3" stroke="#c0c0c0" stroke-width="0.9" fill="none"/><path d="M98.9 118.3 L98.9 126.3" stroke="#c0c0c0" stroke-width="0.9" fill="none"/><rect x="94.4" y="121.3" width="4" height="2" fill="#050505"/><path d="M112.85000000000002 124.80000000000001 H127.35000000000002 V119.80000000000001 H122.40000000000002 V115.10000000000001 H117.80000000000003 V119.80000000000001 H112.85000000000002 Z" fill="#050505" stroke="#b8b8b8" stroke-width=".75"/><rect x="137.1" y="119.8" width="14.9" height="5" fill="#050505" stroke="#b6b6b6" stroke-width=".75"/><path d="M160.85000000000002 119.80000000000001 H175.35000000000002 V124.80000000000001 H170.40000000000003 V129.5 H165.8 V124.80000000000001 H160.85000000000002 Z" fill="#050505" stroke="#b8b8b8" stroke-width=".75"/><rect x="184.8" y="119.8" width="14.8" height="5" fill="#050505" stroke="#b6b6b6" stroke-width=".75"/><rect x="46.6" y="139.3" width="5" height="14.0" fill="#050505" stroke="#b6b6b6" stroke-width=".75"/><path d="M46.5 168.6 L51.7 168.6" stroke="#3a9ea4" stroke-width="1" fill="none"/><path d="M47.6 170.1 L50.6 170.1" stroke="#2c7c80" stroke-width="0.7" fill="none"/><rect x="165.6" y="139.3" width="5" height="14.0" fill="#050505" stroke="#b6b6b6" stroke-width=".75"/><path d="M164.1 169.8 L172.1 169.8" stroke="#c0c0c0" stroke-width="0.9" fill="none"/><path d="M164.1 173.0 L172.1 173.0" stroke="#c0c0c0" stroke-width="0.9" fill="none"/><rect x="167.1" y="170.4" width="2" height="2" fill="#050505"/><path d="M165.5 184.0 L170.7 184.0" stroke="#3a9ea4" stroke-width="1" fill="none"/><path d="M166.6 185.5 L169.6 185.5" stroke="#2c7c80" stroke-width="0.7" fill="none"/><path d="M213.2 133.6 L218.4 133.6" stroke="#3a9ea4" stroke-width="1" fill="none"/><path d="M214.3 135.1 L217.3 135.1" stroke="#2c7c80" stroke-width="0.7" fill="none"/><rect x="220.0" y="107.0" width="14.8" height="5" fill="#050505" stroke="#b6b6b6" stroke-width=".75"/><path d="M251.3 105.5 L251.3 113.5" stroke="#c0c0c0" stroke-width="0.9" fill="none"/><path d="M256.3 105.5 L256.3 113.5" stroke="#c0c0c0" stroke-width="0.9" fill="none"/><rect x="251.8" y="108.5" width="4" height="2" fill="#050505"/><path d="M253.8 113.5 L253.8 116.5" stroke="#a2a2a2" stroke-width="0.7" fill="none"/><path d="M252.3 116.5 L255.3 116.5" stroke="#a2a2a2" stroke-width="0.7" fill="none"/><rect x="268.7" y="107.0" width="14.1" height="5" fill="#050505" stroke="#b6b6b6" stroke-width=".75"/><path d="M296.75 107.0 H311.25 V112.0 H306.3 V116.7 H301.7 V112.0 H296.75 Z" fill="#050505" stroke="#b8b8b8" stroke-width=".75"/><rect x="321.8" y="107.0" width="15.0" height="5" fill="#050505" stroke="#b6b6b6" stroke-width=".75"/><path d="M345.15000000000003 112.0 H359.65000000000003 V107.0 H354.70000000000005 V102.3 H350.1 V107.0 H345.15000000000003 Z" fill="#050505" stroke="#b8b8b8" stroke-width=".75"/><path d="M370.8 109.5 a2.47 2.6 0 0 1 4.93 0 a2.47 2.6 0 0 1 4.93 0 a2.47 2.6 0 0 1 4.93 0" stroke="#c8c8c8" stroke-width=".9" fill="none"/><rect x="370.8" y="110.0" width="14.8" height="1.2" fill="#050505"/><rect x="395.0" y="107.0" width="15.3" height="5" fill="#050505" stroke="#b6b6b6" stroke-width=".75"/><path d="M419.55 112.0 H434.05 V107.0 H429.1 V102.3 H424.5 V107.0 H419.55 Z" fill="#050505" stroke="#b8b8b8" stroke-width=".75"/><rect x="443.0" y="107.0" width="14.8" height="5" fill="#050505" stroke="#b6b6b6" stroke-width=".75"/><rect x="301.5" y="127.0" width="5" height="14.4" fill="#050505" stroke="#b6b6b6" stroke-width=".75"/><path d="M301.4 153.4 L306.6 153.4" stroke="#3a9ea4" stroke-width="1" fill="none"/><path d="M302.5 154.9 L305.5 154.9" stroke="#2c7c80" stroke-width="0.7" fill="none"/><rect x="424.3" y="79.0" width="5" height="14.0" fill="#050505" stroke="#b6b6b6" stroke-width=".75"/><path d="M436.2 76.6 L441.4 76.6" stroke="#3a9ea4" stroke-width="1" fill="none"/><path d="M437.3 78.1 L440.3 78.1" stroke="#2c7c80" stroke-width="0.7" fill="none"/><rect x="143.5" y="59.5" width="14.0" height="5" fill="#050505" stroke="#b6b6b6" stroke-width=".75"/><path d="M162.8 59.4 L170.4 62.0 L162.8 64.6Z" fill="#050505" stroke="#b8b8b8" stroke-width=".75"/><rect x="179.6" y="59.5" width="14.9" height="5" fill="#050505" stroke="#b6b6b6" stroke-width=".75"/><path d="M204.3 62.0 a2.25 2.6 0 0 1 4.50 0 a2.25 2.6 0 0 1 4.50 0 a2.25 2.6 0 0 1 4.50 0" stroke="#c8c8c8" stroke-width=".9" fill="none"/><rect x="204.3" y="62.5" width="13.5" height="1.2" fill="#050505"/><rect x="226.4" y="59.5" width="14.9" height="5" fill="#050505" stroke="#b6b6b6" stroke-width=".75"/><path d="M249.95 64.5 H264.45 V59.5 H259.5 V54.8 H254.89999999999998 V59.5 H249.95 Z" fill="#050505" stroke="#b8b8b8" stroke-width=".75"/><rect x="274.2" y="59.5" width="14.5" height="5" fill="#050505" stroke="#b6b6b6" stroke-width=".75"/><path d="M302.3 58.0 L302.3 66.0" stroke="#c0c0c0" stroke-width="0.9" fill="none"/><path d="M307.3 58.0 L307.3 66.0" stroke="#c0c0c0" stroke-width="0.9" fill="none"/><rect x="302.8" y="61.0" width="4" height="2" fill="#050505"/><rect x="321.8" y="59.5" width="15.0" height="5" fill="#050505" stroke="#b6b6b6" stroke-width=".75"/><path d="M354.90000000000003 54.75 V69.25 H349.90000000000003 V64.3 H345.20000000000005 V59.7 H349.90000000000003 V54.75 Z" fill="#050505" stroke="#b8b8b8" stroke-width=".75"/><rect x="262.3" y="23.3" width="14.9" height="5" fill="#050505" stroke="#b6b6b6" stroke-width=".75"/><path d="M285.8 21.6 L300.6 23.1 V28.5 L285.8 30.0Z" fill="#050505" stroke="#b8b8b8" stroke-width=".75"/><rect x="309.8" y="23.3" width="15.0" height="5" fill="#050505" stroke="#b6b6b6" stroke-width=".75"/><path d="M338.3 21.8 L338.3 29.8" stroke="#c0c0c0" stroke-width="0.9" fill="none"/><path d="M343.3 21.8 L343.3 29.8" stroke="#c0c0c0" stroke-width="0.9" fill="none"/><rect x="338.8" y="24.8" width="4" height="2" fill="#050505"/><rect x="349.9" y="30.9" width="5" height="14.0" fill="#050505" stroke="#b6b6b6" stroke-width=".75"/><rect x="349.9" y="78.0" width="5" height="15.0" fill="#050505" stroke="#b6b6b6" stroke-width=".75"/></svg>
<div style="left:131.6px;top:281.2px;width:474.6px;height:2.4px;background:#dcdbd3;"></div>
<div style="left:133px;top:284.4px;width:473px;height:11.6px;background:#fff;"></div>
<div style="left:181.5px;top:283.3px;width:424.7px;height:1.2px;background:#8c8b86;"></div>
<div style="left:133px;top:283.4px;width:48.5px;height:12.6px;background:#cbc9bc;border-right:1px solid #55534f;border-bottom:1px solid #55534f;"></div>
<svg style="left:135px;top:285px" width="10" height="10" viewBox="0 0 10 10"><path d="M1.5 2.5h6v6h-6z" fill="#f4f4e2" stroke="#5c6b2c" stroke-width="1"/><path d="M3 1h6v6" fill="none" stroke="#6d7a3a" stroke-width="1"/><rect x="3" y="4" width="3" height="3" fill="#a8c060"/></svg>
<span class="t" style="left:146px;top:285.8px;transform:scaleX(0.837);">Schemati...</span>
<div style="left:607.6px;top:88px;width:1px;height:209px;background:#f4f2ec;"></div>
<div style="left:609.6px;top:88px;width:1.2px;height:209px;background:#4a4946;"></div>
<div style="left:611px;top:88px;width:1.5px;height:209px;background:#e9e7e0;"></div>
<div class="ptitle" style="left:613.3px;top:88.7px;width:243.7px;height:7px;"><span class="t" style="left:2px;top:-0.8px;font-size:6.3px;color:#b4b2ac;transform:scaleX(0.871);top:-1.5px;">Properties</span></div>
<div style="left:834.6px;top:89.3px;width:5.6px;height:5.6px;background:#d2d1c4;border:.5px solid;border-color:#fff #555 #555 #fff;"><svg style="left:-.5px;top:-.5px" width="5.6" height="5.6" viewBox="0 0 5.6 5.6"><path d="M1.6 1.6h2.2v1.6H2.8v1.2" stroke="#222" stroke-width=".9" fill="none"/></svg></div>
<div style="left:841.4px;top:89.3px;width:5.6px;height:5.6px;background:#d2d1c4;border:.5px solid;border-color:#fff #555 #555 #fff;"><svg style="left:-.5px;top:-.5px" width="5.6" height="5.6" viewBox="0 0 5.6 5.6"><rect x="1.6" y="3.4" width="2.4" height="1" fill="#222"/></svg></div>
<div style="left:848.6px;top:89.3px;width:5.6px;height:5.6px;background:#d2d1c4;border:.5px solid;border-color:#fff #555 #555 #fff;"><svg style="left:-.5px;top:-.5px" width="5.6" height="5.6" viewBox="0 0 5.6 5.6"><path d="M1.3 1.3L4.3 4.3M4.3 1.3L1.3 4.3" stroke="#111" stroke-width="1.1"/></svg></div>
<div style="left:613.5px;top:95.6px;width:230px;height:176.8px;background:#fff;"></div>
<div style="left:613.5px;top:95.6px;width:230px;height:12px;background:#fff;border-bottom:1px solid #a2a2a0;"></div>
<span class="t" style="left:626.7px;top:97.6px;font-size:7.5px;letter-spacing:0.02px;">Property</span>
<span class="t" style="left:681px;top:97.6px;font-size:7.5px;transform:scaleX(0.901);">Value</span>
<span class="t" style="left:707.7px;top:97.6px;font-size:7.5px;transform:scaleX(0.994);">Instance Val</span>
<div style="left:613.5px;top:118.17999999999999px;width:230px;height:0.9px;background:#bcbcba;"></div>
<div style="left:613.5px;top:129.26px;width:230px;height:0.9px;background:#bcbcba;"></div>
<div style="left:613.5px;top:140.34px;width:230px;height:0.9px;background:#bcbcba;"></div>
<div style="left:613.5px;top:151.42px;width:230px;height:0.9px;background:#bcbcba;"></div>
<div style="left:613.5px;top:162.5px;width:230px;height:0.9px;background:#bcbcba;"></div>
<div style="left:613.5px;top:173.57999999999998px;width:230px;height:0.9px;background:#bcbcba;"></div>
<div style="left:613.5px;top:184.66px;width:230px;height:0.9px;background:#bcbcba;"></div>
<div style="left:613.5px;top:195.74px;width:230px;height:0.9px;background:#bcbcba;"></div>
<div style="left:613.5px;top:206.82px;width:230px;height:0.9px;background:#bcbcba;"></div>
<div style="left:613.5px;top:217.89999999999998px;width:230px;height:0.9px;background:#bcbcba;"></div>
<div style="left:613.5px;top:228.98px;width:230px;height:0.9px;background:#bcbcba;"></div>
<div style="left:613.5px;top:240.06px;width:230px;height:0.9px;background:#bcbcba;"></div>
<div style="left:613.5px;top:251.14px;width:230px;height:0.9px;background:#bcbcba;"></div>
<div style="left:613.5px;top:262.22px;width:230px;height:0.9px;background:#bcbcba;"></div>
<div style="left:667px;top:95.6px;width:1px;height:176.8px;background:#a9a9a7;"></div>
<div style="left:705px;top:95.6px;width:1px;height:176.8px;background:#a9a9a7;"></div>
<div style="left:748.2px;top:95.6px;width:1px;height:176.8px;background:#8e8e8c;"></div>
<div style="left:616.4px;top:109.6px;width:6.6px;height:6.6px;border-top:1.1px solid #55534f;border-left:1.1px solid #55534f;"></div>
<div style="left:670.2px;top:109.6px;width:6.6px;height:6.6px;border-top:1.1px solid #9a9892;border-left:1.1px solid #9a9892;"></div>
<span class="t" style="left:626.7px;top:109.2px;font-size:7.5px;transform:scaleX(0.853);">CLASS</span>
<span class="t i" style="left:680.6px;top:109.2px;font-size:7.5px;color:#a5a39d;transform:scaleX(0.850);">RF</span>
<div style="left:616.4px;top:120.67999999999999px;width:6.6px;height:6.6px;border-top:1.1px solid #55534f;border-left:1.1px solid #55534f;"></div>
<div style="left:670.2px;top:120.67999999999999px;width:6.6px;height:6.6px;border-top:1.1px solid #55534f;border-left:1.1px solid #55534f;"></div><svg style="left:671.6px;top:122.07999999999998px" width="5.5" height="5" viewBox="0 0 5.5 5"><path d="M0.5 2.2L2 3.9L5 0.6" stroke="#111" stroke-width="1.3" fill="none"/></svg>
<span class="t" style="left:626.7px;top:120.3px;font-size:7.5px;transform:scaleX(0.867);">COMP</span>
<span class="t" style="left:680.6px;top:120.3px;font-size:7.5px;transform:scaleX(0.912);">MTEE</span>
<div style="left:616.4px;top:131.76px;width:6.6px;height:6.6px;border-top:1.1px solid #55534f;border-left:1.1px solid #55534f;"></div><svg style="left:617.8px;top:133.16px" width="5.5" height="5" viewBox="0 0 5.5 5"><path d="M0.5 2.2L2 3.9L5 0.6" stroke="#111" stroke-width="1.3" fill="none"/></svg>
<div style="left:670.2px;top:131.76px;width:6.6px;height:6.6px;border-top:1.1px solid #55534f;border-left:1.1px solid #55534f;"></div><svg style="left:671.6px;top:133.16px" width="5.5" height="5" viewBox="0 0 5.5 5"><path d="M0.5 2.2L2 3.9L5 0.6" stroke="#111" stroke-width="1.3" fill="none"/></svg>
<span class="t" style="left:626.7px;top:131.4px;font-size:7.5px;transform:scaleX(0.965);">Part Label</span>
<span class="t" style="left:707.7px;top:131.4px;font-size:7.5px;transform:scaleX(0.904);">RFPART</span>
<div style="left:616.4px;top:142.84px;width:6.6px;height:6.6px;border-top:1.1px solid #55534f;border-left:1.1px solid #55534f;"></div><svg style="left:617.8px;top:144.24px" width="5.5" height="5" viewBox="0 0 5.5 5"><path d="M0.5 2.2L2 3.9L5 0.6" stroke="#111" stroke-width="1.3" fill="none"/></svg>
<div style="left:670.2px;top:142.84px;width:6.6px;height:6.6px;border-top:1.1px solid #55534f;border-left:1.1px solid #55534f;"></div><svg style="left:671.6px;top:144.24px" width="5.5" height="5" viewBox="0 0 5.5 5"><path d="M0.5 2.2L2 3.9L5 0.6" stroke="#111" stroke-width="1.3" fill="none"/></svg>
<span class="t" style="left:626.7px;top:142.4px;font-size:7.5px;transform:scaleX(0.962);">Part Name</span>
<span class="t" style="left:707.7px;top:142.4px;font-size:7.5px;transform:scaleX(0.904);">RFPART</span>
<div style="left:616.4px;top:153.92px;width:6.6px;height:6.6px;border-top:1.1px solid #55534f;border-left:1.1px solid #55534f;"></div>
<div style="left:670.2px;top:153.92px;width:6.6px;height:6.6px;border-top:1.1px solid #9a9892;border-left:1.1px solid #9a9892;"></div>
<span class="t" style="left:626.7px;top:153.5px;font-size:7.5px;transform:scaleX(0.999);">Part Numbe</span>
<span class="t i" style="left:680.6px;top:153.5px;font-size:7.5px;color:#a5a39d;transform:scaleX(0.884);">RFPAR</span>
<div style="left:616.4px;top:165.0px;width:6.6px;height:6.6px;border-top:1.1px solid #55534f;border-left:1.1px solid #55534f;"></div>
<div style="left:670.2px;top:165.0px;width:6.6px;height:6.6px;border-top:1.1px solid #9a9892;border-left:1.1px solid #9a9892;"></div>
<span class="t" style="left:626.7px;top:164.6px;font-size:7.5px;transform:scaleX(0.955);">RFParametr</span>
<span class="t i" style="left:680.6px;top:164.6px;font-size:7.5px;color:#a5a39d;transform:scaleX(0.895);">COMP/</span>
<div style="left:616.4px;top:176.07999999999998px;width:6.6px;height:6.6px;border-top:1.1px solid #55534f;border-left:1.1px solid #55534f;"></div>
<div style="left:670.2px;top:176.07999999999998px;width:6.6px;height:6.6px;border-top:1.1px solid #55534f;border-left:1.1px solid #55534f;"></div><svg style="left:671.6px;top:177.48px" width="5.5" height="5" viewBox="0 0 5.5 5"><path d="M0.5 2.2L2 3.9L5 0.6" stroke="#111" stroke-width="1.3" fill="none"/></svg>
<span class="t" style="left:626.7px;top:175.7px;font-size:7.5px;transform:scaleX(0.914);">RF_REGION</span>
<span class="t" style="left:707.7px;top:175.7px;font-size:7.5px;transform:scaleX(0.969);">wilkinson</span>
<div style="left:616.4px;top:187.16px;width:6.6px;height:6.6px;border-top:1.1px solid #55534f;border-left:1.1px solid #55534f;"></div><svg style="left:617.8px;top:188.56px" width="5.5" height="5" viewBox="0 0 5.5 5"><path d="M0.5 2.2L2 3.9L5 0.6" stroke="#111" stroke-width="1.3" fill="none"/></svg>
<div style="left:670.2px;top:187.16px;width:6.6px;height:6.6px;border-top:1.1px solid #55534f;border-left:1.1px solid #55534f;"></div><svg style="left:671.6px;top:188.56px" width="5.5" height="5" viewBox="0 0 5.5 5"><path d="M0.5 2.2L2 3.9L5 0.6" stroke="#111" stroke-width="1.3" fill="none"/></svg>
<span class="t" style="left:626.7px;top:186.8px;font-size:7.5px;transform:scaleX(0.969);">Ref Designa</span>
<span class="t" style="left:707.7px;top:186.8px;font-size:7.5px;transform:scaleX(0.861);">RF17</span>
<div style="left:616.4px;top:198.24px;width:6.6px;height:6.6px;border-top:1.1px solid #55534f;border-left:1.1px solid #55534f;"></div><svg style="left:617.8px;top:199.64000000000001px" width="5.5" height="5" viewBox="0 0 5.5 5"><path d="M0.5 2.2L2 3.9L5 0.6" stroke="#111" stroke-width="1.3" fill="none"/></svg>
<div style="left:670.2px;top:198.24px;width:6.6px;height:6.6px;border-top:1.1px solid #55534f;border-left:1.1px solid #55534f;"></div><svg style="left:671.6px;top:199.64000000000001px" width="5.5" height="5" viewBox="0 0 5.5 5"><path d="M0.5 2.2L2 3.9L5 0.6" stroke="#111" stroke-width="1.3" fill="none"/></svg>
<span class="t" style="left:626.7px;top:197.8px;font-size:7.5px;transform:scaleX(0.912);">Subst</span>
<span class="t" style="left:680.6px;top:197.8px;font-size:7.5px;transform:scaleX(0.905);">MSub1</span>
<div style="left:616.4px;top:209.32px;width:6.6px;height:6.6px;border-top:1.1px solid #55534f;border-left:1.1px solid #55534f;"></div>
<div style="left:670.2px;top:209.32px;width:6.6px;height:6.6px;border-top:1.1px solid #55534f;border-left:1.1px solid #55534f;"></div>
<span class="t" style="left:626.7px;top:208.9px;font-size:7.5px;transform:scaleX(0.954);">Temp</span>
<div style="left:616.4px;top:220.39999999999998px;width:6.6px;height:6.6px;border-top:1.1px solid #55534f;border-left:1.1px solid #55534f;"></div><svg style="left:617.8px;top:221.79999999999998px" width="5.5" height="5" viewBox="0 0 5.5 5"><path d="M0.5 2.2L2 3.9L5 0.6" stroke="#111" stroke-width="1.3" fill="none"/></svg>
<div style="left:670.2px;top:220.39999999999998px;width:6.6px;height:6.6px;border-top:1.1px solid #55534f;border-left:1.1px solid #55534f;"></div><svg style="left:671.6px;top:221.79999999999998px" width="5.5" height="5" viewBox="0 0 5.5 5"><path d="M0.5 2.2L2 3.9L5 0.6" stroke="#111" stroke-width="1.3" fill="none"/></svg>
<span class="t" style="left:626.7px;top:220.0px;font-size:7.5px;transform:scaleX(0.933);">W1</span>
<span class="t" style="left:680.6px;top:220.0px;font-size:7.5px;letter-spacing:0.01px;">25.0 m</span>
<div style="left:616.4px;top:231.48px;width:6.6px;height:6.6px;border-top:1.1px solid #55534f;border-left:1.1px solid #55534f;"></div><svg style="left:617.8px;top:232.88px" width="5.5" height="5" viewBox="0 0 5.5 5"><path d="M0.5 2.2L2 3.9L5 0.6" stroke="#111" stroke-width="1.3" fill="none"/></svg>
<div style="left:670.2px;top:231.48px;width:6.6px;height:6.6px;border-top:1.1px solid #55534f;border-left:1.1px solid #55534f;"></div><svg style="left:671.6px;top:232.88px" width="5.5" height="5" viewBox="0 0 5.5 5"><path d="M0.5 2.2L2 3.9L5 0.6" stroke="#111" stroke-width="1.3" fill="none"/></svg>
<span class="t" style="left:626.7px;top:231.1px;font-size:7.5px;transform:scaleX(0.933);">W2</span>
<span class="t" style="left:680.6px;top:231.1px;font-size:7.5px;letter-spacing:0.01px;">25.0 m</span>
<div style="left:616.4px;top:242.56px;width:6.6px;height:6.6px;border-top:1.1px solid #55534f;border-left:1.1px solid #55534f;"></div><svg style="left:617.8px;top:243.96px" width="5.5" height="5" viewBox="0 0 5.5 5"><path d="M0.5 2.2L2 3.9L5 0.6" stroke="#111" stroke-width="1.3" fill="none"/></svg>
<div style="left:670.2px;top:242.56px;width:6.6px;height:6.6px;border-top:1.1px solid #55534f;border-left:1.1px solid #55534f;"></div><svg style="left:671.6px;top:243.96px" width="5.5" height="5" viewBox="0 0 5.5 5"><path d="M0.5 2.2L2 3.9L5 0.6" stroke="#111" stroke-width="1.3" fill="none"/></svg>
<span class="t" style="left:626.7px;top:242.2px;font-size:7.5px;transform:scaleX(0.933);">W3</span>
<span class="t" style="left:680.6px;top:242.2px;font-size:7.5px;letter-spacing:0.01px;">50.0 m</span>
<span class="t" style="left:626.7px;top:253.2px;font-size:7.5px;transform:scaleX(0.958);">Id</span>
<span class="t" style="left:680.6px;top:253.2px;font-size:7.5px;letter-spacing:0.10px;">$1I8</span>
<span class="t" style="left:626.7px;top:264.3px;font-size:7.5px;transform:scaleX(0.999);">Partition</span>
<span class="t" style="left:680.6px;top:264.3px;font-size:7.5px;transform:scaleX(0.915);">RF_TLi</span>
<div style="left:843.4px;top:95.6px;width:10.6px;height:176.8px;background:#eceae4;"></div>
<div class="rais" style="left:843.4px;top:95.6px;width:10.6px;height:9.4px;background:#cbc9bd;border-color:#e9e7df #55534f #55534f #e9e7df;"><svg style="left:1.3px;top:0.7px" width="6" height="6" viewBox="0 0 6 6"><path d="M1 4L3 1.4L5 4z" fill="#111"/></svg></div>
<div class="rais" style="left:843.4px;top:263px;width:10.6px;height:9.4px;background:#cbc9bd;border-color:#e9e7df #55534f #55534f #e9e7df;"><svg style="left:1.3px;top:0.7px" width="6" height="6" viewBox="0 0 6 6"><path d="M1 1.6L3 4.2L5 1.6z" fill="#111"/></svg></div>
<div class="rais" style="left:843.4px;top:105px;width:10.6px;height:114px;background:#cbc9bd;"></div>
<div style="left:854px;top:95.6px;width:3px;height:177px;background:#cbc9bd;"></div>
<div style="left:613.5px;top:272.4px;width:243.5px;height:0.9px;background:#8f8d87;"></div>
<span class="t b" style="left:616px;top:275.1px;font-size:8.4px;transform:scaleX(0.956);">No Item Selected</span>
<span class="t" style="left:616px;top:283.8px;font-size:7.5px;transform:scaleX(0.975);">Select an item to see its description</span>
<div style="left:613.5px;top:295.6px;width:243.5px;height:0.9px;background:#a9a7a1;"></div>
<div style="left:0px;top:296.5px;width:857px;height:0.9px;background:#a6a49e;"></div>
<div style="left:0px;top:298.6px;width:857px;height:1.2px;background:#3a3937;"></div>
<div style="left:0px;top:299.8px;width:857px;height:1px;background:#e4e2db;"></div>
<div style="left:4px;top:301px;width:6.8px;height:118.8px;background:linear-gradient(0deg,#858480 0%,#9c9a96 50%,#c4c1ba 100%);"></div>
<div style="left:4.7px;top:302px;width:5.6px;height:5.6px;background:#d2d1c4;border:.5px solid;border-color:#fff #555 #555 #fff;"><svg style="left:-.5px;top:-.5px" width="5.6" height="5.6" viewBox="0 0 5.6 5.6"><path d="M1.3 1.3L4.3 4.3M4.3 1.3L1.3 4.3" stroke="#111" stroke-width="1.1"/></svg></div>
<div style="left:4.7px;top:308.5px;width:5.6px;height:5.6px;background:#d2d1c4;border:.5px solid;border-color:#fff #555 #555 #fff;"><svg style="left:-.5px;top:-.5px" width="5.6" height="5.6" viewBox="0 0 5.6 5.6"><rect x="1.6" y="3.4" width="2.4" height="1" fill="#222"/></svg></div>
<div style="left:4.7px;top:315px;width:5.6px;height:5.6px;background:#d2d1c4;border:.5px solid;border-color:#fff #555 #555 #fff;"><svg style="left:-.5px;top:-.5px" width="5.6" height="5.6" viewBox="0 0 5.6 5.6"><path d="M1.2 2l1.6 2 1.6-2z" fill="#222"/></svg></div>
<span class="t" style="left:0px;top:-4.2px;font-size:5.8px;color:#c3c0b9;left:7.5px;top:413px;transform:rotate(-90deg);-webkit-text-stroke:0;">Symbols</span>
<div style="left:14.4px;top:302.8px;width:34.6px;height:9.6px;background:#d3d2c6;"></div>
<div style="left:49px;top:301.6px;width:47.4px;height:12px;background:#d3d1c5;border-top:1px solid #f4f2ec;border-left:1px solid #f4f2ec;"></div>
<div style="left:96.2px;top:302px;width:1.3px;height:11.6px;background:#45443f;"></div>
<div style="left:141.2px;top:303.5px;width:1.1px;height:10.5px;background:#55534f;"></div>
<div style="left:12px;top:313.6px;width:37px;height:1px;background:#f1efe9;"></div>
<div style="left:97.4px;top:313.6px;width:437px;height:1px;background:#f1efe9;"></div>
<span class="t" style="left:15.8px;top:303.8px;font-size:7.5px;transform:scaleX(0.926);">Part View</span>
<span class="t" style="left:52px;top:302.8px;font-size:7.5px;transform:scaleX(0.921);">Symbol View</span>
<span class="t" style="left:98.4px;top:303.8px;font-size:7.5px;transform:scaleX(0.864);">Reuse Blocks</span>
<div style="left:17.2px;top:321.6px;width:109.6px;height:12px;background:#fff;border:1px solid;border-color:#5d5b56 #efede7 #efede7 #5d5b56;"></div>
<div style="left:129px;top:321.6px;width:99.69999999999999px;height:12px;background:#fff;border:1px solid;border-color:#5d5b56 #efede7 #efede7 #5d5b56;"></div>
<div style="left:231.3px;top:321.6px;width:73.0px;height:12px;background:#fff;border:1px solid;border-color:#5d5b56 #efede7 #efede7 #5d5b56;"></div>
<div style="left:307px;top:321.6px;width:46.30000000000001px;height:12px;background:#fff;border:1px solid;border-color:#5d5b56 #efede7 #efede7 #5d5b56;"></div>
<div style="left:355.6px;top:321.6px;width:46.099999999999966px;height:12px;background:#fff;border:1px solid;border-color:#5d5b56 #efede7 #efede7 #5d5b56;"></div>
<div style="left:404px;top:321.6px;width:46.69999999999999px;height:12px;background:#fff;border:1px solid;border-color:#5d5b56 #efede7 #efede7 #5d5b56;"></div>
<div style="left:471px;top:321.4px;width:53px;height:12.6px;background:#cdcbbf;border:1px solid #2f2e2c;box-shadow:inset 1px 1px 0 #f4f2ea,inset -1px -1px 0 #8a8781;"></div>
<span class="t" style="left:478px;top:323.4px;font-size:7.5px;transform:scaleX(0.927);">Clear Filters</span>
<div style="left:17.2px;top:340.4px;width:453px;height:76px;background:#fff;border:1px solid;border-color:#5d5b56 #efede7 #efede7 #5d5b56;"></div>
<div style="left:18.2px;top:341.4px;width:110.39999999999999px;height:9.2px;background:#cbc9bd;border:.8px solid;border-color:#f8f6f0 #55534f #55534f #f8f6f0;"></div>
<span class="t" style="left:20.4px;top:342.1px;font-size:7.5px;transform:scaleX(0.930);">Partition</span>
<div style="left:129.2px;top:341.4px;width:101.60000000000002px;height:9.2px;background:#cbc9bd;border:.8px solid;border-color:#f8f6f0 #55534f #55534f #f8f6f0;"></div>
<span class="t" style="left:131.39999999999998px;top:342.1px;font-size:7.5px;transform:scaleX(0.899);">Symbol</span>
<div style="left:231.4px;top:341.4px;width:75.20000000000002px;height:9.2px;background:#cbc9bd;border:.8px solid;border-color:#f8f6f0 #55534f #55534f #f8f6f0;"></div>
<span class="t" style="left:233.6px;top:342.1px;font-size:7.5px;transform:scaleX(0.944);">Part</span>
<div style="left:307.2px;top:341.4px;width:48.0px;height:9.2px;background:#cbc9bd;border:.8px solid;border-color:#f8f6f0 #55534f #55534f #f8f6f0;"></div>
<span class="t" style="left:309.4px;top:342.1px;font-size:7.5px;transform:scaleX(0.906);">Part Name</span>
<div style="left:355.8px;top:341.4px;width:47.80000000000001px;height:9.2px;background:#cbc9bd;border:.8px solid;border-color:#f8f6f0 #55534f #55534f #f8f6f0;"></div>
<span class="t" style="left:358.0px;top:342.1px;font-size:7.5px;transform:scaleX(0.950);">Part Label</span>
<div style="left:404.2px;top:341.4px;width:47.0px;height:9.2px;background:#cbc9bd;border:.8px solid;border-color:#f8f6f0 #55534f #55534f #f8f6f0;"></div>
<span class="t" style="left:406.4px;top:342.1px;font-size:7.5px;transform:scaleX(0.912);">Value</span>
<div style="left:451.8px;top:341.4px;width:8.399999999999977px;height:9.2px;background:#cbc9bd;border:.8px solid;border-color:#f8f6f0 #55534f #55534f #f8f6f0;"></div>
<span class="t" style="left:20.4px;top:351.8px;font-size:7.5px;transform:scaleX(0.890);">RF_TLines_Finline</span>
<span class="t" style="left:20.4px;top:360.9px;font-size:7.5px;transform:scaleX(0.893);">RF_TLines_Ideal</span>
<span class="t" style="left:20.4px;top:370.1px;font-size:7.5px;transform:scaleX(0.906);">RF_TLines_Microstrip</span>
<div style="left:19.4px;top:388.0px;width:439.6px;height:9.2px;background:#20246c;"></div>
<div style="left:129.2px;top:353.8px;width:4.8px;height:4.8px;background:#fff;border:.7px solid #777570;"></div><div style="left:130.4px;top:355.84999999999997px;width:2.4px;height:.7px;background:#222;"></div><div style="left:131.25px;top:355.0px;width:.7px;height:2.4px;background:#222;"></div>
<div style="left:129.2px;top:362.95px;width:4.8px;height:4.8px;background:#fff;border:.7px solid #777570;"></div><div style="left:130.4px;top:364.99999999999994px;width:2.4px;height:.7px;background:#222;"></div><div style="left:131.25px;top:364.15px;width:.7px;height:2.4px;background:#222;"></div>
<div style="left:129.2px;top:372.1px;width:4.8px;height:4.8px;background:#fff;border:.7px solid #777570;"></div><div style="left:130.4px;top:374.15px;width:2.4px;height:.7px;background:#222;"></div>
<span class="t i" style="left:137.2px;top:351.8px;font-size:7.5px;color:#a9a7a1;transform:scaleX(0.849);">bfinl...</span>
<span class="t i" style="left:137.2px;top:360.9px;font-size:7.5px;color:#a9a7a1;transform:scaleX(0.828);">clin...</span>
<span class="t" style="left:137.2px;top:370.1px;font-size:7.5px;transform:scaleX(0.899);">maclin</span>
<span class="t" style="left:137.2px;top:379.2px;font-size:7.5px;transform:scaleX(0.929);">maclin3</span>
<span class="t" style="left:137.2px;top:388.4px;font-size:7.5px;color:#8e90b4;transform:scaleX(0.872);">mbend</span>
<span class="t" style="left:137.2px;top:397.6px;font-size:7.5px;transform:scaleX(0.904);">mbend2</span>
<span class="t" style="left:137.2px;top:406.7px;font-size:7.5px;transform:scaleX(0.935);">mbstub</span>
<div style="left:459.6px;top:341.4px;width:9.8px;height:74px;background:#e9e8e1;"></div>
<div class="rais" style="left:459.6px;top:341.4px;width:9.8px;height:9.2px;background:#cbc9bd;border-color:#e9e7df #55534f #55534f #e9e7df;"><svg style="left:0.9px;top:0.6px" width="6" height="6" viewBox="0 0 6 6"><path d="M1 4L3 1.4L5 4z" fill="#111"/></svg></div>
<div class="rais" style="left:459.6px;top:406.2px;width:9.8px;height:9.2px;background:#cbc9bd;border-color:#e9e7df #55534f #55534f #e9e7df;"><svg style="left:0.9px;top:0.6px" width="6" height="6" viewBox="0 0 6 6"><path d="M1 1.6L3 4.2L5 1.6z" fill="#111"/></svg></div>
<div class="rais" style="left:459.6px;top:350.4px;width:9.8px;height:27.4px;background:#dedcd3;border-color:#eceae3 #6a6863 #6a6863 #eceae3;"></div>
<div style="left:474px;top:341.4px;width:7.7px;height:7.4px;background:#fff;border:1px solid;border-color:#55534f #efede7 #efede7 #55534f;"></div>
<span class="t" style="left:484.6px;top:340.6px;font-size:7.5px;transform:scaleX(0.881);">Add Nets</span>
<div style="left:474px;top:353.6px;width:7.7px;height:7.4px;background:#cbc9bd;border:1px solid;border-color:#77746e #efede7 #efede7 #77746e;"></div>
<span class="t" style="left:484.6px;top:353.0px;font-size:7.5px;color:#a3a09a;transform:scaleX(0.865);text-shadow:.6px .6px 0 #f4f2ec;">Add Net Names</span>
<div style="left:531.6px;top:313px;width:1px;height:107.5px;background:#8a8882;"></div>
<div style="left:533px;top:300.6px;width:1px;height:124px;background:#e6e4dc;"></div>
<div style="left:534.7px;top:300.6px;width:1.2px;height:124.2px;background:#2f2e2c;"></div>
<div style="left:536px;top:300.6px;width:1px;height:124px;background:#e2e0d8;"></div>
<div style="left:540.4px;top:301.2px;width:310.8px;height:12.4px;background:#cdcbbf;border:1px solid #2f2e2c;box-shadow:inset 1px 1px 0 #f4f2ea,inset -1px -1px 0 #8a8781;"></div>
<span class="t" style="left:675px;top:303.2px;font-size:7.5px;transform:scaleX(0.894);">Place Symbol</span>
<div style="left:540px;top:318.4px;width:312.2px;height:87.2px;background:#807e79;"></div>
<div class="k" style="left:541px;top:319.2px;width:310.7px;height:85.8px;"></div>
<svg style="left:541px;top:319.6px" width="309.6" height="85.4" viewBox="0 0 309.6 85.4"><path d="M139.4 27.5 H171.2 V56.6 H139.4Z" stroke="#aab2aa" stroke-width="0.8" fill="none"/><path d="M149.0 56.6 V47.3 H160.9 V37.3 H166.0 V27.5" stroke="#c4c8c4" stroke-width="0.8" fill="none"/><path d="M166.0 37.3 H171.2" stroke="#707470" stroke-width="0.7" fill="none"/><path d="M160.9 56.6 L171.2 49.2" stroke="#8c908c" stroke-width="0.7" fill="none"/><path d="M139.4 51.7 H149.0" stroke="#6a6e6a" stroke-width="0.7" fill="none"/><path d="M139.4 51.7 H143.0" stroke="#f0f0f0" stroke-width="1" fill="none"/><text x="139.6" y="62.0" font-family="Liberation Sans,sans-serif" font-size="4.8" fill="#d0d0d0" textLength="16.4" lengthAdjust="spacingAndGlyphs">MBEND</text><text x="139.6" y="73.4" font-family="Liberation Sans,sans-serif" font-size="4.8" fill="#b4b4b4" textLength="33.6" lengthAdjust="spacingAndGlyphs">Subst=MSub1</text><text x="139.6" y="79.2" font-family="Liberation Sans,sans-serif" font-size="4.8" fill="#b4b4b4" textLength="30" lengthAdjust="spacingAndGlyphs">W=25.0 mils</text><text x="139.6" y="85.6" font-family="Liberation Sans,sans-serif" font-size="4.8" fill="#8e8e8e" textLength="33.4" lengthAdjust="spacingAndGlyphs">Angle=90 deg</text><rect x="36" y="51.39999999999998" width="1.2" height="1.2" fill="#2a2a2a"/><rect x="88" y="51.39999999999998" width="1.2" height="1.2" fill="#2a2a2a"/><rect x="192" y="51.39999999999998" width="1.2" height="1.2" fill="#2a2a2a"/><rect x="244" y="51.39999999999998" width="1.2" height="1.2" fill="#2a2a2a"/></svg>
<div style="left:540.7px;top:409.4px;width:310.5px;height:12.6px;background:#fff;border:1px solid;border-color:#5d5b56 #efede7 #efede7 #5d5b56;"></div>
<span class="t" style="left:542.8px;top:411.0px;font-size:7.5px;transform:scaleX(0.915);">Symbol RF_TLines_Microstrip:mbend.1</span>
<div class="rais" style="left:840.4px;top:410.6px;width:9.8px;height:10.4px;background:#cbc9bd;border-color:#e9e7df #55534f #55534f #e9e7df;"><svg style="left:0.9px;top:1.2px" width="6" height="6" viewBox="0 0 6 6"><path d="M1 1.6L3 4.2L5 1.6z" fill="#111"/></svg></div>
<div style="left:12px;top:420.6px;width:520.6px;height:0.9px;background:#8c8a85;"></div>
<div style="left:0px;top:424.8px;width:857px;height:1.2px;background:#2f2e2c;"></div>
<div style="left:0px;top:426px;width:857px;height:0.9px;background:#e9e7e0;"></div>
<div style="left:4px;top:428px;width:6.8px;height:62px;background:linear-gradient(0deg,#858480 0%,#9c9a96 50%,#c4c1ba 100%);"></div>
<div style="left:4.7px;top:428.6px;width:5.6px;height:5.6px;background:#d2d1c4;border:.5px solid;border-color:#fff #555 #555 #fff;"><svg style="left:-.5px;top:-.5px" width="5.6" height="5.6" viewBox="0 0 5.6 5.6"><path d="M1.3 1.3L4.3 4.3M4.3 1.3L1.3 4.3" stroke="#111" stroke-width="1.1"/></svg></div>
<div style="left:4.7px;top:434.4px;width:5.6px;height:5.6px;background:#d2d1c4;border:.5px solid;border-color:#fff #555 #555 #fff;"><svg style="left:-.5px;top:-.5px" width="5.6" height="5.6" viewBox="0 0 5.6 5.6"><rect x="1.6" y="3.4" width="2.4" height="1" fill="#222"/></svg></div>
<div style="left:4.7px;top:440.6px;width:5.6px;height:5.6px;background:#d2d1c4;border:.5px solid;border-color:#fff #555 #555 #fff;"><svg style="left:-.5px;top:-.5px" width="5.6" height="5.6" viewBox="0 0 5.6 5.6"><path d="M1.2 2l1.6 2 1.6-2z" fill="#222"/></svg></div>
<span class="t" style="left:0px;top:-4.2px;font-size:5.8px;color:#c3c0b9;left:7.5px;top:483.5px;transform:rotate(-90deg);-webkit-text-stroke:0;">Output</span>
<div style="left:11.4px;top:427px;width:845.6px;height:1.2px;background:#6a6863;"></div>
<div style="left:11px;top:427px;width:1.3px;height:63px;background:#55534f;"></div>
<div style="left:12.4px;top:428px;width:844.6px;height:51.4px;background:#fff;border-left:1px solid #77746e;"></div>
<div style="left:12.4px;top:479.4px;width:844.6px;height:10.6px;background:#cbc9bd;"></div>
<div style="left:71px;top:479.6px;width:786px;height:1.2px;background:#45443f;"></div>
<div class="rais" style="left:12.9px;top:479.6px;width:11px;height:10.2px;background:#cbc9bd;border-color:#f6f4ee #3d3c39 #3d3c39 #f6f4ee;"></div>
<div class="rais" style="left:23.9px;top:479.6px;width:11px;height:10.2px;background:#cbc9bd;border-color:#f6f4ee #3d3c39 #3d3c39 #f6f4ee;"></div>
<svg style="left:16px;top:481.6px" width="5" height="6" viewBox="0 0 5 6"><path d="M4 .5L1 3L4 5.5z" fill="#9a9892"/></svg><svg style="left:27.4px;top:481.6px" width="5" height="6" viewBox="0 0 5 6"><path d="M1 .5L4 3L1 5.5z" fill="#9a9892"/></svg>
<svg style="left:35px;top:479px" width="38" height="11" viewBox="0 0 38 11"><path d="M1 0.4 L4.2 10 H31.4 L35.6 0.4 Z" fill="#fff"/><path d="M1 0.4 L4.2 10 H31.4 L35.6 0.4" fill="none" stroke="#2f2e2c" stroke-width="1.1"/></svg>
<span class="t b" style="left:40.4px;top:479.9px;font-size:8.4px;transform:scaleX(0.867);">Output</span>
<div style="left:0px;top:491.4px;width:857px;height:1px;background:#e9e7df;"></div>
<span class="t" style="left:2.8px;top:495.2px;transform:scaleX(0.891);">For Help, press F1</span>
<div style="left:319.5px;top:493.4px;width:58.0px;height:11.6px;border:.8px solid;border-color:#98968f #eeece6 #eeece6 #98968f;"></div>
<div style="left:378.5px;top:493.4px;width:48.0px;height:11.6px;border:.8px solid;border-color:#98968f #eeece6 #eeece6 #98968f;"></div>
<div style="left:427.5px;top:493.4px;width:75.0px;height:11.6px;border:.8px solid;border-color:#98968f #eeece6 #eeece6 #98968f;"></div>
<div style="left:503.5px;top:493.4px;width:49.5px;height:11.6px;border:.8px solid;border-color:#98968f #eeece6 #eeece6 #98968f;"></div>
<div style="left:554px;top:493.4px;width:16.5px;height:11.6px;border:.8px solid;border-color:#98968f #eeece6 #eeece6 #98968f;"></div>
<div style="left:571px;top:493.4px;width:10.5px;height:11.6px;border:.8px solid;border-color:#98968f #eeece6 #eeece6 #98968f;"></div>
<div style="left:582.5px;top:493.4px;width:31.5px;height:11.6px;border:.8px solid;border-color:#98968f #eeece6 #eeece6 #98968f;"></div>
<div style="left:615px;top:493.4px;width:242px;height:11.6px;border:.8px solid;border-color:#98968f #eeece6 #eeece6 #98968f;"></div>
<span class="t" style="left:323px;top:495.2px;transform:scaleX(0.900);">Select</span>
<span class="t" style="left:505px;top:495.2px;transform:scaleX(0.943);">Sheet 1</span>
<svg style="left:571.6px;top:495.8px" width="7" height="7" viewBox="0 0 7 7"><circle cx="3.5" cy="3.5" r="3" fill="#3fa845"/><circle cx="2.8" cy="2.6" r="1.2" fill="#9fe39f"/></svg>
<span class="t" style="left:585.5px;top:495.2px;transform:scaleX(0.886);">Online</span>
<span class="t" style="left:616.5px;top:495.2px;transform:scaleX(0.940);">Library: C:\MentorGraphics\...\standard\RF\ShapesLibrary\DxVidar.lm</span>
</div>
</body>
</html>
